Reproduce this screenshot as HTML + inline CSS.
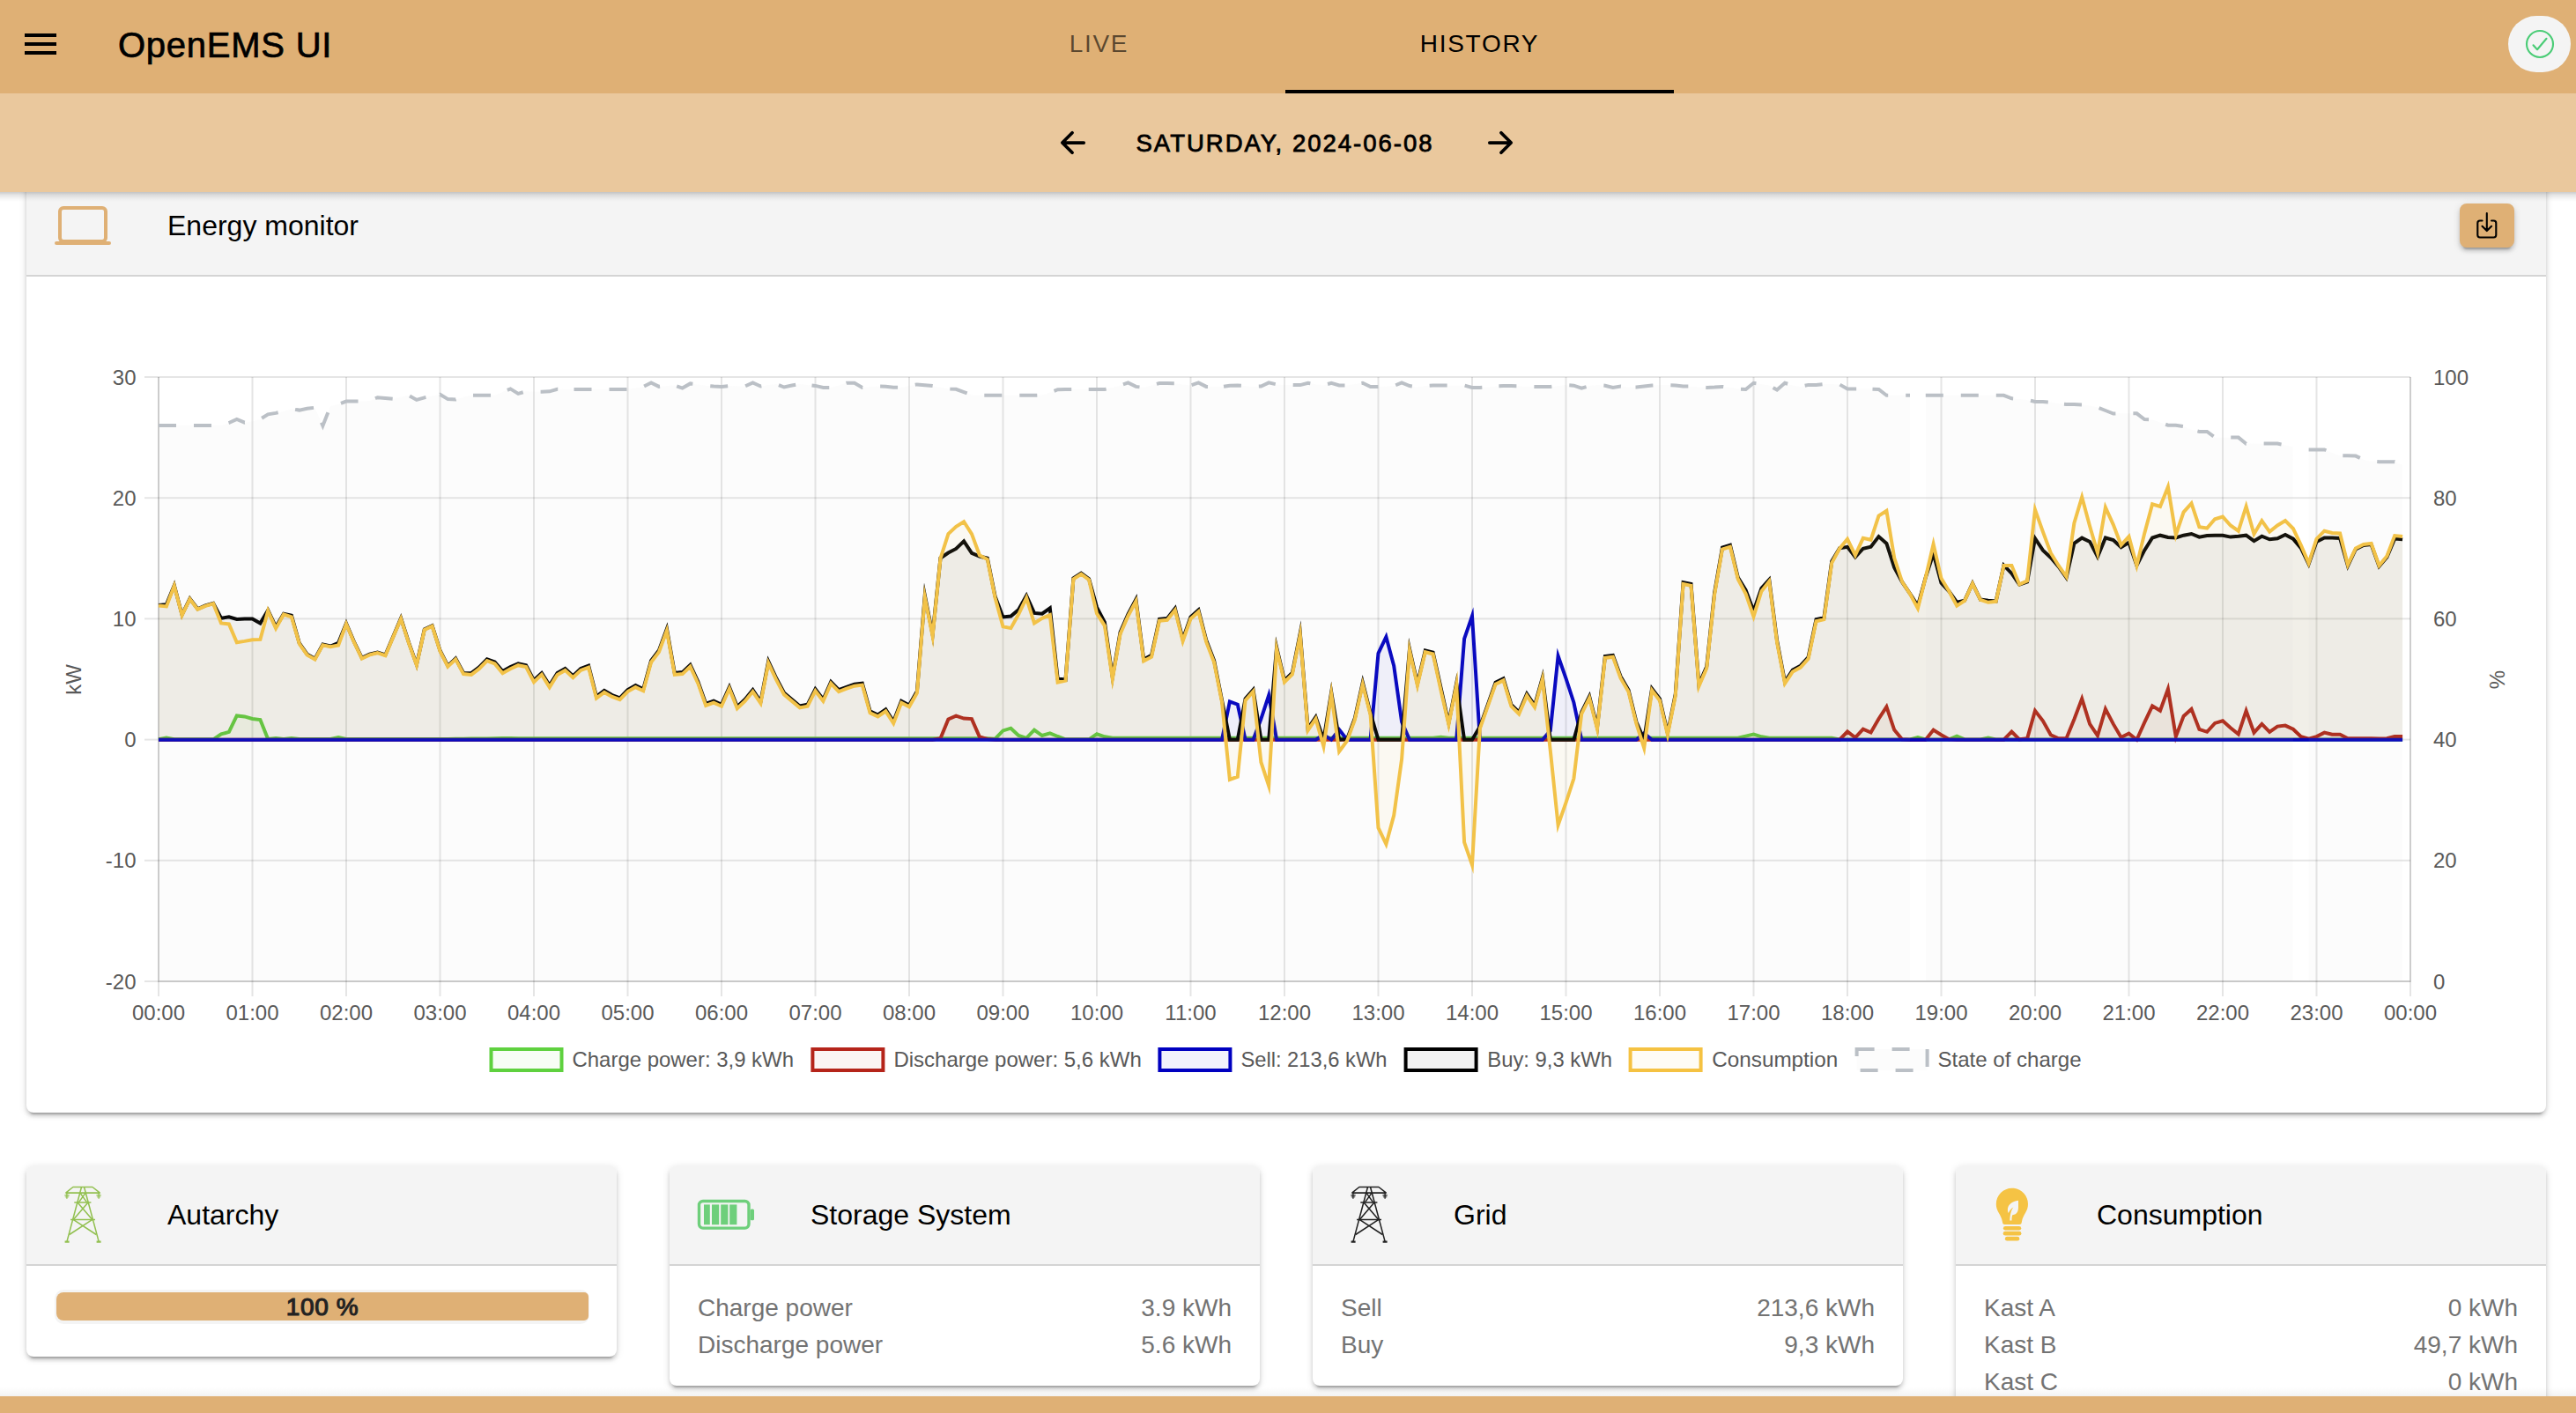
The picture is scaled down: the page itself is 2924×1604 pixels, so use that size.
<!DOCTYPE html>
<html lang="en"><head><meta charset="utf-8"><title>OpenEMS UI</title>
<style>
html,body{margin:0;padding:0}
body{width:2924px;height:1604px;overflow:hidden;background:#fff;position:relative;font-family:"Liberation Sans",sans-serif;color:#000}
.abs{position:absolute}
#h1{left:0;top:0;width:2924px;height:106px;background:#dfb075;z-index:5}
#h2{left:0;top:106px;width:2924px;height:112px;background:#eac89d;z-index:5}
#h2sh{left:0;top:218px;width:2924px;height:11px;background:linear-gradient(rgba(0,0,0,.2),rgba(0,0,0,.1) 30%,rgba(0,0,0,.03) 70%,rgba(0,0,0,0));z-index:5}
#foot{left:0;top:1585px;width:2924px;height:19px;background:#dfb075;z-index:5}
#footsh{left:0;top:1575px;width:2924px;height:10px;background:linear-gradient(rgba(0,0,0,0),rgba(0,0,0,.05));z-index:5}
.title{left:134px;top:21px;font-size:40px;line-height:60px;letter-spacing:.75px;-webkit-text-stroke:.7px #000;white-space:nowrap}
.tab{top:0;height:106px;width:441px;text-align:center;font-size:28px;line-height:100px;letter-spacing:1.7px;white-space:nowrap}
.date{left:1289.5px;top:143px;font-size:27.5px;line-height:40px;letter-spacing:2px;white-space:nowrap;-webkit-text-stroke:.8px #000}
.card{position:absolute;background:#fff;border-radius:8px;overflow:hidden;box-shadow:0 6px 2px -4px rgba(0,0,0,.2),0 4px 4px 0 rgba(0,0,0,.14),0 2px 10px 0 rgba(0,0,0,.12)}
.chead{position:absolute;left:0;top:0;right:0;height:112px;background:#f4f4f4;border-bottom:2px solid #d4d4d4}
.ctitle{position:absolute;left:160px;top:36px;font-size:32px;line-height:40px;white-space:nowrap}
.rows{position:absolute;left:32px;right:32px;top:141px;font-size:28px;line-height:42px;color:#737373}
.row{display:flex;justify-content:space-between;white-space:nowrap}
</style></head><body>
<div class="card" style="left:30px;top:200px;width:2860px;height:1063px"><div class="chead"><svg width="64" height="64" viewBox="0 0 512 512" style="position:absolute;left:32px;top:24px" fill="none" stroke="#dfb075" stroke-width="32" stroke-linejoin="round" stroke-linecap="round"><rect x="48" y="96" width="416" height="304" rx="32" ry="32"/><path d="M16 416h480"/></svg><span class="ctitle">Energy monitor</span><div class="abs" style="left:2762px;top:31px;width:62px;height:50px;border-radius:8px;background:#dfb075;box-shadow:0 6px 2px -4px rgba(0,0,0,.2),0 4px 4px 0 rgba(0,0,0,.14),0 2px 10px 0 rgba(0,0,0,.12)"><svg width="33.6" height="33.6" viewBox="0 0 512 512" style="position:absolute;left:14.2px;top:8.3px" fill="none" stroke="#000" stroke-width="32" stroke-linecap="round" stroke-linejoin="round"><path d="M336 176h40a40 40 0 0140 40v208a40 40 0 01-40 40H136a40 40 0 01-40-40V216a40 40 0 0140-40h40"/><path d="M176 272l80 80 80-80M256 48v288"/></svg></div></div></div>
<svg width="2924" height="1604" viewBox="0 0 2924 1604" style="position:absolute;left:0;top:0">
<g><rect x="285.5" y="428" width="2" height="686" fill="#000" fill-opacity="0.1"/><rect x="285.5" y="1114" width="2" height="17" fill="#000" fill-opacity="0.1"/><rect x="392" y="428" width="2" height="686" fill="#000" fill-opacity="0.1"/><rect x="392" y="1114" width="2" height="17" fill="#000" fill-opacity="0.1"/><rect x="498.5" y="428" width="2" height="686" fill="#000" fill-opacity="0.1"/><rect x="498.5" y="1114" width="2" height="17" fill="#000" fill-opacity="0.1"/><rect x="605" y="428" width="2" height="686" fill="#000" fill-opacity="0.1"/><rect x="605" y="1114" width="2" height="17" fill="#000" fill-opacity="0.1"/><rect x="711.5" y="428" width="2" height="686" fill="#000" fill-opacity="0.1"/><rect x="711.5" y="1114" width="2" height="17" fill="#000" fill-opacity="0.1"/><rect x="818" y="428" width="2" height="686" fill="#000" fill-opacity="0.1"/><rect x="818" y="1114" width="2" height="17" fill="#000" fill-opacity="0.1"/><rect x="924.5" y="428" width="2" height="686" fill="#000" fill-opacity="0.1"/><rect x="924.5" y="1114" width="2" height="17" fill="#000" fill-opacity="0.1"/><rect x="1031" y="428" width="2" height="686" fill="#000" fill-opacity="0.1"/><rect x="1031" y="1114" width="2" height="17" fill="#000" fill-opacity="0.1"/><rect x="1137.5" y="428" width="2" height="686" fill="#000" fill-opacity="0.1"/><rect x="1137.5" y="1114" width="2" height="17" fill="#000" fill-opacity="0.1"/><rect x="1244" y="428" width="2" height="686" fill="#000" fill-opacity="0.1"/><rect x="1244" y="1114" width="2" height="17" fill="#000" fill-opacity="0.1"/><rect x="1350.5" y="428" width="2" height="686" fill="#000" fill-opacity="0.1"/><rect x="1350.5" y="1114" width="2" height="17" fill="#000" fill-opacity="0.1"/><rect x="1457" y="428" width="2" height="686" fill="#000" fill-opacity="0.1"/><rect x="1457" y="1114" width="2" height="17" fill="#000" fill-opacity="0.1"/><rect x="1563.5" y="428" width="2" height="686" fill="#000" fill-opacity="0.1"/><rect x="1563.5" y="1114" width="2" height="17" fill="#000" fill-opacity="0.1"/><rect x="1670" y="428" width="2" height="686" fill="#000" fill-opacity="0.1"/><rect x="1670" y="1114" width="2" height="17" fill="#000" fill-opacity="0.1"/><rect x="1776.5" y="428" width="2" height="686" fill="#000" fill-opacity="0.1"/><rect x="1776.5" y="1114" width="2" height="17" fill="#000" fill-opacity="0.1"/><rect x="1883" y="428" width="2" height="686" fill="#000" fill-opacity="0.1"/><rect x="1883" y="1114" width="2" height="17" fill="#000" fill-opacity="0.1"/><rect x="1989.5" y="428" width="2" height="686" fill="#000" fill-opacity="0.1"/><rect x="1989.5" y="1114" width="2" height="17" fill="#000" fill-opacity="0.1"/><rect x="2096" y="428" width="2" height="686" fill="#000" fill-opacity="0.1"/><rect x="2096" y="1114" width="2" height="17" fill="#000" fill-opacity="0.1"/><rect x="2202.5" y="428" width="2" height="686" fill="#000" fill-opacity="0.1"/><rect x="2202.5" y="1114" width="2" height="17" fill="#000" fill-opacity="0.1"/><rect x="2309" y="428" width="2" height="686" fill="#000" fill-opacity="0.1"/><rect x="2309" y="1114" width="2" height="17" fill="#000" fill-opacity="0.1"/><rect x="2415.5" y="428" width="2" height="686" fill="#000" fill-opacity="0.1"/><rect x="2415.5" y="1114" width="2" height="17" fill="#000" fill-opacity="0.1"/><rect x="2522" y="428" width="2" height="686" fill="#000" fill-opacity="0.1"/><rect x="2522" y="1114" width="2" height="17" fill="#000" fill-opacity="0.1"/><rect x="2628.5" y="428" width="2" height="686" fill="#000" fill-opacity="0.1"/><rect x="2628.5" y="1114" width="2" height="17" fill="#000" fill-opacity="0.1"/><rect x="2735" y="428" width="2" height="686" fill="#000" fill-opacity="0.1"/><rect x="2735" y="1114" width="2" height="17" fill="#000" fill-opacity="0.1"/><rect x="179" y="1115" width="2" height="16" fill="#000" fill-opacity="0.1"/><rect x="164" y="427" width="2572" height="2" fill="#000" fill-opacity="0.1"/><rect x="164" y="564.2" width="2572" height="2" fill="#000" fill-opacity="0.1"/><rect x="164" y="701.4" width="2572" height="2" fill="#000" fill-opacity="0.1"/><rect x="164" y="838.6" width="2572" height="2" fill="#000" fill-opacity="0.1"/><rect x="164" y="975.8" width="2572" height="2" fill="#000" fill-opacity="0.1"/><rect x="164" y="1113" width="2572" height="2" fill="#000" fill-opacity="0.1"/><rect x="179" y="428" width="2" height="687" fill="#000" fill-opacity="0.2"/><rect x="2735" y="428" width="2" height="685" fill="#000" fill-opacity="0.1"/><rect x="181" y="1113" width="2556" height="2" fill="#000" fill-opacity="0.12"/></g>
<g fill="none" stroke-width="4" stroke-linejoin="miter" stroke-miterlimit="10">
<path d="M180 839.7 L180 839.3 L188.9 837.6 L197.8 839.3 L206.6 839.3 L215.5 839.3 L224.4 839.3 L233.2 839.3 L242.1 839.3 L251 833.4 L259.9 830.9 L268.8 812.5 L277.6 813.4 L286.5 816 L295.4 817.1 L304.2 839 L313.1 838.1 L322 839 L330.9 838.1 L339.8 839 L348.6 839 L357.5 839 L366.4 839 L375.2 839 L384.1 837 L393 839 L401.9 839 L410.8 839 L419.6 839 L428.5 839 L437.4 839 L446.2 839 L455.1 839 L464 839 L472.9 839 L481.8 839 L490.6 839 L499.5 839 L508.4 838.9 L517.2 838.8 L526.1 838.7 L535 838.6 L543.9 838.5 L552.8 838.4 L561.6 838.2 L570.5 838.1 L579.4 838 L588.2 838.3 L597.1 838.3 L606 838.3 L614.9 838.3 L623.8 838.3 L632.6 838.3 L641.5 838.3 L650.4 838.3 L659.2 838.3 L668.1 838.3 L677 838.3 L685.9 838.3 L694.8 838.3 L703.6 838.3 L712.5 838.3 L721.4 838.3 L730.2 838.3 L739.1 838.3 L748 838.3 L756.9 838.3 L765.8 838.3 L774.6 838.3 L783.5 838.3 L792.4 838.3 L801.2 838.3 L810.1 838.3 L819 838.3 L827.9 838.3 L836.8 838.3 L845.6 838.3 L854.5 838.3 L863.4 838.3 L872.2 838.3 L881.1 838.3 L890 838.3 L898.9 838.3 L907.8 838.3 L916.6 838.3 L925.5 838.3 L934.4 838.3 L943.2 838.3 L952.1 838.3 L961 838.3 L969.9 838.3 L978.8 838.3 L987.6 838.3 L996.5 838.3 L1005.4 838.3 L1014.2 838.3 L1023.1 838.3 L1032 838.3 L1040.9 838.3 L1049.8 838.3 L1058.6 838.3 L1067.5 838.3 L1076.4 838.3 L1085.2 838.3 L1094.1 838.3 L1103 838.3 L1111.9 838.3 L1120.8 838.3 L1129.6 838.7 L1138.5 829.4 L1147.4 826.7 L1156.2 835 L1165.1 837.8 L1174 828.6 L1182.9 835 L1191.8 832.3 L1200.6 836 L1209.5 839.3 L1218.4 839.3 L1227.2 839.3 L1236.1 839.3 L1245 833.3 L1253.9 836.3 L1262.8 837.8 L1271.6 837.8 L1280.5 837.8 L1289.4 837.8 L1298.2 837.8 L1307.1 837.8 L1316 837.8 L1324.9 837.8 L1333.8 837.8 L1342.6 837.8 L1351.5 837.8 L1360.4 837.8 L1369.2 837.8 L1378.1 837.8 L1387 837.8 L1395.9 837.8 L1404.8 837.8 L1413.6 837.8 L1422.5 837.8 L1431.4 837.8 L1440.2 837.8 L1449.1 837.8 L1458 837.8 L1466.9 837.8 L1475.8 837.8 L1484.6 837.8 L1493.5 837.8 L1502.4 837.8 L1511.2 837.8 L1520.1 837.8 L1529 837.8 L1537.9 837.8 L1546.8 837.8 L1555.6 837.8 L1564.5 837.8 L1573.4 837.8 L1582.2 837.8 L1591.1 837.8 L1600 837.8 L1608.9 837.8 L1617.8 837.8 L1626.6 837.8 L1635.5 836.7 L1644.4 837.8 L1653.2 837.8 L1662.1 837.8 L1671 837.8 L1679.9 837.8 L1688.8 837.8 L1697.6 837.8 L1706.5 837.8 L1715.4 837.8 L1724.2 837.8 L1733.1 837.8 L1742 837.8 L1750.9 837.8 L1759.8 837.8 L1768.6 837.8 L1777.5 837.8 L1786.4 837.8 L1795.2 837.8 L1804.1 837.8 L1813 837.8 L1821.9 837.8 L1830.8 837.8 L1839.6 837.8 L1848.5 837.8 L1857.4 837.8 L1866.2 837.8 L1875.1 837.8 L1884 837.8 L1892.9 837.8 L1901.8 837.8 L1910.6 837.8 L1919.5 837.8 L1928.4 837.8 L1937.2 837.8 L1946.1 837.8 L1955 837.8 L1963.9 837.8 L1972.8 837.8 L1981.6 835.6 L1990.5 833.5 L1999.4 836.3 L2008.2 837.8 L2017.1 837.8 L2026 837.8 L2034.9 837.8 L2043.8 837.8 L2052.6 837.8 L2061.5 837.8 L2070.4 837.8 L2079.2 837.8 L2088.1 839.4 L2097 839.4 L2105.9 839.4 L2114.8 839.4 L2123.6 839.4 L2132.5 839.4 L2141.4 839.4 L2150.2 839.4 L2159.1 839.4 L2168 839.4 L2176.9 837 L2185.8 839.4 L2194.6 839.4 L2203.5 839.4 L2212.4 839.4 L2221.2 835.6 L2230.1 839.4 L2239 839.4 L2247.9 839.4 L2256.8 837.6 L2265.6 839.4 L2274.5 839.4 L2283.4 839.4 L2292.2 839.4 L2301.1 839.4 L2310 839.4 L2318.9 839.4 L2327.8 839.4 L2336.6 839.4 L2345.5 839.4 L2354.4 839.4 L2363.2 839.4 L2372.1 839.4 L2381 839.4 L2389.9 839.4 L2398.8 839.4 L2407.6 839.4 L2416.5 839.4 L2425.4 839.4 L2434.2 839.4 L2443.1 839.4 L2452 839.4 L2460.9 839.4 L2469.8 839.4 L2478.6 839.4 L2487.5 839.4 L2496.4 839.4 L2505.2 839.4 L2514.1 839.4 L2523 839.4 L2531.9 839.4 L2540.8 839.4 L2549.6 839.4 L2558.5 839.4 L2567.4 839.4 L2576.2 839.4 L2585.1 839.4 L2594 839.4 L2602.9 839.4 L2611.8 839.4 L2620.6 839.4 L2629.5 839.4 L2638.4 839.4 L2647.2 839.4 L2656.1 839.4 L2665 839.4 L2673.9 839.4 L2682.8 839.4 L2691.6 839.4 L2700.5 839.4 L2709.4 839.4 L2718.2 839.4 L2727.1 839.4 L2727.1 839.7 Z" fill="rgb(95,209,63)" fill-opacity="0.05" stroke="none"/>
<path d="M180 839.3 L188.9 837.6 L197.8 839.3 L206.6 839.3 L215.5 839.3 L224.4 839.3 L233.2 839.3 L242.1 839.3 L251 833.4 L259.9 830.9 L268.8 812.5 L277.6 813.4 L286.5 816 L295.4 817.1 L304.2 839 L313.1 838.1 L322 839 L330.9 838.1 L339.8 839 L348.6 839 L357.5 839 L366.4 839 L375.2 839 L384.1 837 L393 839 L401.9 839 L410.8 839 L419.6 839 L428.5 839 L437.4 839 L446.2 839 L455.1 839 L464 839 L472.9 839 L481.8 839 L490.6 839 L499.5 839 L508.4 838.9 L517.2 838.8 L526.1 838.7 L535 838.6 L543.9 838.5 L552.8 838.4 L561.6 838.2 L570.5 838.1 L579.4 838 L588.2 838.3 L597.1 838.3 L606 838.3 L614.9 838.3 L623.8 838.3 L632.6 838.3 L641.5 838.3 L650.4 838.3 L659.2 838.3 L668.1 838.3 L677 838.3 L685.9 838.3 L694.8 838.3 L703.6 838.3 L712.5 838.3 L721.4 838.3 L730.2 838.3 L739.1 838.3 L748 838.3 L756.9 838.3 L765.8 838.3 L774.6 838.3 L783.5 838.3 L792.4 838.3 L801.2 838.3 L810.1 838.3 L819 838.3 L827.9 838.3 L836.8 838.3 L845.6 838.3 L854.5 838.3 L863.4 838.3 L872.2 838.3 L881.1 838.3 L890 838.3 L898.9 838.3 L907.8 838.3 L916.6 838.3 L925.5 838.3 L934.4 838.3 L943.2 838.3 L952.1 838.3 L961 838.3 L969.9 838.3 L978.8 838.3 L987.6 838.3 L996.5 838.3 L1005.4 838.3 L1014.2 838.3 L1023.1 838.3 L1032 838.3 L1040.9 838.3 L1049.8 838.3 L1058.6 838.3 L1067.5 838.3 L1076.4 838.3 L1085.2 838.3 L1094.1 838.3 L1103 838.3 L1111.9 838.3 L1120.8 838.3 L1129.6 838.7 L1138.5 829.4 L1147.4 826.7 L1156.2 835 L1165.1 837.8 L1174 828.6 L1182.9 835 L1191.8 832.3 L1200.6 836 L1209.5 839.3 L1218.4 839.3 L1227.2 839.3 L1236.1 839.3 L1245 833.3 L1253.9 836.3 L1262.8 837.8 L1271.6 837.8 L1280.5 837.8 L1289.4 837.8 L1298.2 837.8 L1307.1 837.8 L1316 837.8 L1324.9 837.8 L1333.8 837.8 L1342.6 837.8 L1351.5 837.8 L1360.4 837.8 L1369.2 837.8 L1378.1 837.8 L1387 837.8 L1395.9 837.8 L1404.8 837.8 L1413.6 837.8 L1422.5 837.8 L1431.4 837.8 L1440.2 837.8 L1449.1 837.8 L1458 837.8 L1466.9 837.8 L1475.8 837.8 L1484.6 837.8 L1493.5 837.8 L1502.4 837.8 L1511.2 837.8 L1520.1 837.8 L1529 837.8 L1537.9 837.8 L1546.8 837.8 L1555.6 837.8 L1564.5 837.8 L1573.4 837.8 L1582.2 837.8 L1591.1 837.8 L1600 837.8 L1608.9 837.8 L1617.8 837.8 L1626.6 837.8 L1635.5 836.7 L1644.4 837.8 L1653.2 837.8 L1662.1 837.8 L1671 837.8 L1679.9 837.8 L1688.8 837.8 L1697.6 837.8 L1706.5 837.8 L1715.4 837.8 L1724.2 837.8 L1733.1 837.8 L1742 837.8 L1750.9 837.8 L1759.8 837.8 L1768.6 837.8 L1777.5 837.8 L1786.4 837.8 L1795.2 837.8 L1804.1 837.8 L1813 837.8 L1821.9 837.8 L1830.8 837.8 L1839.6 837.8 L1848.5 837.8 L1857.4 837.8 L1866.2 837.8 L1875.1 837.8 L1884 837.8 L1892.9 837.8 L1901.8 837.8 L1910.6 837.8 L1919.5 837.8 L1928.4 837.8 L1937.2 837.8 L1946.1 837.8 L1955 837.8 L1963.9 837.8 L1972.8 837.8 L1981.6 835.6 L1990.5 833.5 L1999.4 836.3 L2008.2 837.8 L2017.1 837.8 L2026 837.8 L2034.9 837.8 L2043.8 837.8 L2052.6 837.8 L2061.5 837.8 L2070.4 837.8 L2079.2 837.8 L2088.1 839.4 L2097 839.4 L2105.9 839.4 L2114.8 839.4 L2123.6 839.4 L2132.5 839.4 L2141.4 839.4 L2150.2 839.4 L2159.1 839.4 L2168 839.4 L2176.9 837 L2185.8 839.4 L2194.6 839.4 L2203.5 839.4 L2212.4 839.4 L2221.2 835.6 L2230.1 839.4 L2239 839.4 L2247.9 839.4 L2256.8 837.6 L2265.6 839.4 L2274.5 839.4 L2283.4 839.4 L2292.2 839.4 L2301.1 839.4 L2310 839.4 L2318.9 839.4 L2327.8 839.4 L2336.6 839.4 L2345.5 839.4 L2354.4 839.4 L2363.2 839.4 L2372.1 839.4 L2381 839.4 L2389.9 839.4 L2398.8 839.4 L2407.6 839.4 L2416.5 839.4 L2425.4 839.4 L2434.2 839.4 L2443.1 839.4 L2452 839.4 L2460.9 839.4 L2469.8 839.4 L2478.6 839.4 L2487.5 839.4 L2496.4 839.4 L2505.2 839.4 L2514.1 839.4 L2523 839.4 L2531.9 839.4 L2540.8 839.4 L2549.6 839.4 L2558.5 839.4 L2567.4 839.4 L2576.2 839.4 L2585.1 839.4 L2594 839.4 L2602.9 839.4 L2611.8 839.4 L2620.6 839.4 L2629.5 839.4 L2638.4 839.4 L2647.2 839.4 L2656.1 839.4 L2665 839.4 L2673.9 839.4 L2682.8 839.4 L2691.6 839.4 L2700.5 839.4 L2709.4 839.4 L2718.2 839.4 L2727.1 839.4" stroke="#5fd13f"/>
<path d="M180 839.7 L180 839.7 L188.9 839.7 L197.8 839.7 L206.6 839.7 L215.5 839.7 L224.4 839.7 L233.2 839.7 L242.1 839.7 L251 839.7 L259.9 839.7 L268.8 839.7 L277.6 839.7 L286.5 839.7 L295.4 839.7 L304.2 839.7 L313.1 839.7 L322 839.7 L330.9 839.7 L339.8 839.7 L348.6 839.7 L357.5 839.7 L366.4 839.7 L375.2 839.7 L384.1 839.7 L393 839.7 L401.9 839.7 L410.8 839.7 L419.6 839.7 L428.5 839.7 L437.4 839.7 L446.2 839.7 L455.1 839.7 L464 839.7 L472.9 839.7 L481.8 839.7 L490.6 839.7 L499.5 839.7 L508.4 839.7 L517.2 839.7 L526.1 839.7 L535 839.7 L543.9 839.7 L552.8 839.7 L561.6 839.7 L570.5 839.7 L579.4 839.7 L588.2 839.7 L597.1 839.7 L606 839.7 L614.9 839.7 L623.8 839.7 L632.6 839.7 L641.5 839.7 L650.4 839.7 L659.2 839.7 L668.1 839.7 L677 839.7 L685.9 839.7 L694.8 839.7 L703.6 839.7 L712.5 839.7 L721.4 839.7 L730.2 839.7 L739.1 839.7 L748 839.7 L756.9 839.7 L765.8 839.7 L774.6 839.7 L783.5 839.7 L792.4 839.7 L801.2 839.7 L810.1 839.7 L819 839.7 L827.9 839.7 L836.8 839.7 L845.6 839.7 L854.5 839.7 L863.4 839.7 L872.2 839.7 L881.1 839.7 L890 839.7 L898.9 839.7 L907.8 839.7 L916.6 839.7 L925.5 839.7 L934.4 839.7 L943.2 839.7 L952.1 839.7 L961 839.7 L969.9 839.7 L978.8 839.7 L987.6 839.7 L996.5 839.7 L1005.4 839.7 L1014.2 839.7 L1023.1 839.7 L1032 839.7 L1040.9 839.7 L1049.8 839.7 L1058.6 839.7 L1067.5 838.3 L1076.4 816.4 L1085.2 812.7 L1094.1 815.6 L1103 816.1 L1111.9 836.5 L1120.8 839 L1129.6 839.7 L1138.5 839.7 L1147.4 839.7 L1156.2 839.7 L1165.1 839.7 L1174 839.7 L1182.9 839.7 L1191.8 839.7 L1200.6 839.7 L1209.5 839.7 L1218.4 839.7 L1227.2 839.7 L1236.1 839.7 L1245 839.7 L1253.9 839.7 L1262.8 839.7 L1271.6 839.7 L1280.5 839.7 L1289.4 839.7 L1298.2 839.7 L1307.1 839.7 L1316 839.7 L1324.9 839.7 L1333.8 839.7 L1342.6 839.7 L1351.5 839.7 L1360.4 839.7 L1369.2 839.7 L1378.1 839.7 L1387 839.7 L1395.9 839.7 L1404.8 839.7 L1413.6 839.7 L1422.5 839.7 L1431.4 839.7 L1440.2 839.7 L1449.1 839.7 L1458 839.7 L1466.9 839.7 L1475.8 839.7 L1484.6 839.7 L1493.5 839.7 L1502.4 839.7 L1511.2 839.7 L1520.1 839.7 L1529 839.7 L1537.9 839.7 L1546.8 839.7 L1555.6 839.7 L1564.5 839.7 L1573.4 839.7 L1582.2 839.7 L1591.1 839.7 L1600 839.7 L1608.9 839.7 L1617.8 839.7 L1626.6 839.7 L1635.5 839.7 L1644.4 839.7 L1653.2 839.7 L1662.1 839.7 L1671 839.7 L1679.9 839.7 L1688.8 839.7 L1697.6 839.7 L1706.5 839.7 L1715.4 839.7 L1724.2 839.7 L1733.1 839.7 L1742 839.7 L1750.9 839.7 L1759.8 839.7 L1768.6 839.7 L1777.5 839.7 L1786.4 839.7 L1795.2 839.7 L1804.1 839.7 L1813 839.7 L1821.9 839.7 L1830.8 839.7 L1839.6 839.7 L1848.5 839.7 L1857.4 839.7 L1866.2 839.7 L1875.1 839.7 L1884 839.7 L1892.9 839.7 L1901.8 839.7 L1910.6 839.7 L1919.5 839.7 L1928.4 839.7 L1937.2 839.7 L1946.1 839.7 L1955 839.7 L1963.9 839.7 L1972.8 839.7 L1981.6 839.7 L1990.5 839.7 L1999.4 839.7 L2008.2 839.7 L2017.1 839.7 L2026 839.7 L2034.9 839.7 L2043.8 839.7 L2052.6 839.7 L2061.5 839.7 L2070.4 839.7 L2079.2 839.7 L2088.1 839.7 L2097 830.5 L2105.9 837.4 L2114.8 827.6 L2123.6 831.5 L2132.5 816 L2141.4 802.4 L2150.2 828.6 L2159.1 839.3 L2168 839.7 L2176.9 839.7 L2185.8 839.7 L2194.6 828.6 L2203.5 834.3 L2212.4 839.3 L2221.2 839.7 L2230.1 839.7 L2239 839.7 L2247.9 839.7 L2256.8 839.7 L2265.6 839.7 L2274.5 839.7 L2283.4 830.5 L2292.2 839.3 L2301.1 838.3 L2310 806.8 L2318.9 818.3 L2327.8 834.2 L2336.6 838.3 L2345.5 838.3 L2354.4 816.4 L2363.2 793.1 L2372.1 821.9 L2381 835.2 L2389.9 804.9 L2398.8 821.9 L2407.6 837 L2416.5 832.6 L2425.4 839.7 L2434.2 820.1 L2443.1 801.3 L2452 806.8 L2460.9 782.1 L2469.8 836.1 L2478.6 812.9 L2487.5 804.9 L2496.4 828 L2505.2 830.8 L2514.1 820.9 L2523 818.3 L2531.9 826.3 L2540.8 833.4 L2549.6 806.8 L2558.5 831.6 L2567.4 821.9 L2576.2 830.8 L2585.1 824.6 L2594 823.6 L2602.9 827.8 L2611.8 836.1 L2620.6 838.6 L2629.5 836.1 L2638.4 831.6 L2647.2 833.8 L2656.1 833.8 L2665 838.3 L2673.9 838.3 L2682.8 838.3 L2691.6 838.3 L2700.5 838.6 L2709.4 838.3 L2718.2 836.1 L2727.1 836.1 L2727.1 839.7 Z" fill="rgb(181,36,26)" fill-opacity="0.05" stroke="none"/>
<path d="M180 839.7 L188.9 839.7 L197.8 839.7 L206.6 839.7 L215.5 839.7 L224.4 839.7 L233.2 839.7 L242.1 839.7 L251 839.7 L259.9 839.7 L268.8 839.7 L277.6 839.7 L286.5 839.7 L295.4 839.7 L304.2 839.7 L313.1 839.7 L322 839.7 L330.9 839.7 L339.8 839.7 L348.6 839.7 L357.5 839.7 L366.4 839.7 L375.2 839.7 L384.1 839.7 L393 839.7 L401.9 839.7 L410.8 839.7 L419.6 839.7 L428.5 839.7 L437.4 839.7 L446.2 839.7 L455.1 839.7 L464 839.7 L472.9 839.7 L481.8 839.7 L490.6 839.7 L499.5 839.7 L508.4 839.7 L517.2 839.7 L526.1 839.7 L535 839.7 L543.9 839.7 L552.8 839.7 L561.6 839.7 L570.5 839.7 L579.4 839.7 L588.2 839.7 L597.1 839.7 L606 839.7 L614.9 839.7 L623.8 839.7 L632.6 839.7 L641.5 839.7 L650.4 839.7 L659.2 839.7 L668.1 839.7 L677 839.7 L685.9 839.7 L694.8 839.7 L703.6 839.7 L712.5 839.7 L721.4 839.7 L730.2 839.7 L739.1 839.7 L748 839.7 L756.9 839.7 L765.8 839.7 L774.6 839.7 L783.5 839.7 L792.4 839.7 L801.2 839.7 L810.1 839.7 L819 839.7 L827.9 839.7 L836.8 839.7 L845.6 839.7 L854.5 839.7 L863.4 839.7 L872.2 839.7 L881.1 839.7 L890 839.7 L898.9 839.7 L907.8 839.7 L916.6 839.7 L925.5 839.7 L934.4 839.7 L943.2 839.7 L952.1 839.7 L961 839.7 L969.9 839.7 L978.8 839.7 L987.6 839.7 L996.5 839.7 L1005.4 839.7 L1014.2 839.7 L1023.1 839.7 L1032 839.7 L1040.9 839.7 L1049.8 839.7 L1058.6 839.7 L1067.5 838.3 L1076.4 816.4 L1085.2 812.7 L1094.1 815.6 L1103 816.1 L1111.9 836.5 L1120.8 839 L1129.6 839.7 L1138.5 839.7 L1147.4 839.7 L1156.2 839.7 L1165.1 839.7 L1174 839.7 L1182.9 839.7 L1191.8 839.7 L1200.6 839.7 L1209.5 839.7 L1218.4 839.7 L1227.2 839.7 L1236.1 839.7 L1245 839.7 L1253.9 839.7 L1262.8 839.7 L1271.6 839.7 L1280.5 839.7 L1289.4 839.7 L1298.2 839.7 L1307.1 839.7 L1316 839.7 L1324.9 839.7 L1333.8 839.7 L1342.6 839.7 L1351.5 839.7 L1360.4 839.7 L1369.2 839.7 L1378.1 839.7 L1387 839.7 L1395.9 839.7 L1404.8 839.7 L1413.6 839.7 L1422.5 839.7 L1431.4 839.7 L1440.2 839.7 L1449.1 839.7 L1458 839.7 L1466.9 839.7 L1475.8 839.7 L1484.6 839.7 L1493.5 839.7 L1502.4 839.7 L1511.2 839.7 L1520.1 839.7 L1529 839.7 L1537.9 839.7 L1546.8 839.7 L1555.6 839.7 L1564.5 839.7 L1573.4 839.7 L1582.2 839.7 L1591.1 839.7 L1600 839.7 L1608.9 839.7 L1617.8 839.7 L1626.6 839.7 L1635.5 839.7 L1644.4 839.7 L1653.2 839.7 L1662.1 839.7 L1671 839.7 L1679.9 839.7 L1688.8 839.7 L1697.6 839.7 L1706.5 839.7 L1715.4 839.7 L1724.2 839.7 L1733.1 839.7 L1742 839.7 L1750.9 839.7 L1759.8 839.7 L1768.6 839.7 L1777.5 839.7 L1786.4 839.7 L1795.2 839.7 L1804.1 839.7 L1813 839.7 L1821.9 839.7 L1830.8 839.7 L1839.6 839.7 L1848.5 839.7 L1857.4 839.7 L1866.2 839.7 L1875.1 839.7 L1884 839.7 L1892.9 839.7 L1901.8 839.7 L1910.6 839.7 L1919.5 839.7 L1928.4 839.7 L1937.2 839.7 L1946.1 839.7 L1955 839.7 L1963.9 839.7 L1972.8 839.7 L1981.6 839.7 L1990.5 839.7 L1999.4 839.7 L2008.2 839.7 L2017.1 839.7 L2026 839.7 L2034.9 839.7 L2043.8 839.7 L2052.6 839.7 L2061.5 839.7 L2070.4 839.7 L2079.2 839.7 L2088.1 839.7 L2097 830.5 L2105.9 837.4 L2114.8 827.6 L2123.6 831.5 L2132.5 816 L2141.4 802.4 L2150.2 828.6 L2159.1 839.3 L2168 839.7 L2176.9 839.7 L2185.8 839.7 L2194.6 828.6 L2203.5 834.3 L2212.4 839.3 L2221.2 839.7 L2230.1 839.7 L2239 839.7 L2247.9 839.7 L2256.8 839.7 L2265.6 839.7 L2274.5 839.7 L2283.4 830.5 L2292.2 839.3 L2301.1 838.3 L2310 806.8 L2318.9 818.3 L2327.8 834.2 L2336.6 838.3 L2345.5 838.3 L2354.4 816.4 L2363.2 793.1 L2372.1 821.9 L2381 835.2 L2389.9 804.9 L2398.8 821.9 L2407.6 837 L2416.5 832.6 L2425.4 839.7 L2434.2 820.1 L2443.1 801.3 L2452 806.8 L2460.9 782.1 L2469.8 836.1 L2478.6 812.9 L2487.5 804.9 L2496.4 828 L2505.2 830.8 L2514.1 820.9 L2523 818.3 L2531.9 826.3 L2540.8 833.4 L2549.6 806.8 L2558.5 831.6 L2567.4 821.9 L2576.2 830.8 L2585.1 824.6 L2594 823.6 L2602.9 827.8 L2611.8 836.1 L2620.6 838.6 L2629.5 836.1 L2638.4 831.6 L2647.2 833.8 L2656.1 833.8 L2665 838.3 L2673.9 838.3 L2682.8 838.3 L2691.6 838.3 L2700.5 838.6 L2709.4 838.3 L2718.2 836.1 L2727.1 836.1" stroke="#b5241a"/>
<path d="M180 839.7 L180 839.7 L188.9 839.7 L197.8 839.7 L206.6 839.7 L215.5 839.7 L224.4 839.7 L233.2 839.7 L242.1 839.7 L251 839.7 L259.9 839.7 L268.8 839.7 L277.6 839.7 L286.5 839.7 L295.4 839.7 L304.2 839.7 L313.1 839.7 L322 839.7 L330.9 839.7 L339.8 839.7 L348.6 839.7 L357.5 839.7 L366.4 839.7 L375.2 839.7 L384.1 839.7 L393 839.7 L401.9 839.7 L410.8 839.7 L419.6 839.7 L428.5 839.7 L437.4 839.7 L446.2 839.7 L455.1 839.7 L464 839.7 L472.9 839.7 L481.8 839.7 L490.6 839.7 L499.5 839.7 L508.4 839.7 L517.2 839.7 L526.1 839.7 L535 839.7 L543.9 839.7 L552.8 839.7 L561.6 839.7 L570.5 839.7 L579.4 839.7 L588.2 839.7 L597.1 839.7 L606 839.7 L614.9 839.7 L623.8 839.7 L632.6 839.7 L641.5 839.7 L650.4 839.7 L659.2 839.7 L668.1 839.7 L677 839.7 L685.9 839.7 L694.8 839.7 L703.6 839.7 L712.5 839.7 L721.4 839.7 L730.2 839.7 L739.1 839.7 L748 839.7 L756.9 839.7 L765.8 839.7 L774.6 839.7 L783.5 839.7 L792.4 839.7 L801.2 839.7 L810.1 839.7 L819 839.7 L827.9 839.7 L836.8 839.7 L845.6 839.7 L854.5 839.7 L863.4 839.7 L872.2 839.7 L881.1 839.7 L890 839.7 L898.9 839.7 L907.8 839.7 L916.6 839.7 L925.5 839.7 L934.4 839.7 L943.2 839.7 L952.1 839.7 L961 839.7 L969.9 839.7 L978.8 839.7 L987.6 839.7 L996.5 839.7 L1005.4 839.7 L1014.2 839.7 L1023.1 839.7 L1032 839.7 L1040.9 839.7 L1049.8 839.7 L1058.6 839.7 L1067.5 839.7 L1076.4 839.7 L1085.2 839.7 L1094.1 839.7 L1103 839.7 L1111.9 839.7 L1120.8 839.7 L1129.6 839.7 L1138.5 839.7 L1147.4 839.7 L1156.2 839.7 L1165.1 839.7 L1174 839.7 L1182.9 839.7 L1191.8 839.7 L1200.6 839.7 L1209.5 839.7 L1218.4 839.7 L1227.2 839.7 L1236.1 839.7 L1245 839.7 L1253.9 839.7 L1262.8 839.7 L1271.6 839.7 L1280.5 839.7 L1289.4 839.7 L1298.2 839.7 L1307.1 839.7 L1316 839.7 L1324.9 839.7 L1333.8 839.7 L1342.6 839.7 L1351.5 839.7 L1360.4 839.7 L1369.2 839.7 L1378.1 839.7 L1387 839.7 L1395.9 796.4 L1404.8 799.7 L1413.6 839.7 L1422.5 839.7 L1431.4 816.1 L1440.2 789.3 L1449.1 839.7 L1458 839.7 L1466.9 839.7 L1475.8 839.7 L1484.6 839.7 L1493.5 839.7 L1502.4 834.1 L1511.2 839.7 L1520.1 828.2 L1529 839.7 L1537.9 839.7 L1546.8 839.7 L1555.6 839.7 L1564.5 741.6 L1573.4 723 L1582.2 755.8 L1591.1 819.4 L1600 839.7 L1608.9 839.7 L1617.8 839.7 L1626.6 839.7 L1635.5 839.7 L1644.4 839.7 L1653.2 839.7 L1662.1 725.2 L1671 699.4 L1679.9 839.7 L1688.8 839.7 L1697.6 839.7 L1706.5 839.7 L1715.4 839.7 L1724.2 839.7 L1733.1 839.7 L1742 839.7 L1750.9 839.7 L1759.8 829.3 L1768.6 744.6 L1777.5 770.1 L1786.4 797.5 L1795.2 839.7 L1804.1 839.7 L1813 839.7 L1821.9 839.7 L1830.8 839.7 L1839.6 839.7 L1848.5 839.7 L1857.4 839.7 L1866.2 832.3 L1875.1 839.7 L1884 839.7 L1892.9 839.7 L1901.8 839.7 L1910.6 839.7 L1919.5 839.7 L1928.4 839.7 L1937.2 839.7 L1946.1 839.7 L1955 839.7 L1963.9 839.7 L1972.8 839.7 L1981.6 839.7 L1990.5 839.7 L1999.4 839.7 L2008.2 839.7 L2017.1 839.7 L2026 839.7 L2034.9 839.7 L2043.8 839.7 L2052.6 839.7 L2061.5 839.7 L2070.4 839.7 L2079.2 839.7 L2088.1 839.7 L2097 839.7 L2105.9 839.7 L2114.8 839.7 L2123.6 839.7 L2132.5 839.7 L2141.4 839.7 L2150.2 839.7 L2159.1 839.7 L2168 839.7 L2176.9 839.7 L2185.8 839.7 L2194.6 839.7 L2203.5 839.7 L2212.4 839.7 L2221.2 839.7 L2230.1 839.7 L2239 839.7 L2247.9 839.7 L2256.8 839.7 L2265.6 839.7 L2274.5 839.7 L2283.4 839.7 L2292.2 839.7 L2301.1 839.7 L2310 839.7 L2318.9 839.7 L2327.8 839.7 L2336.6 839.7 L2345.5 839.7 L2354.4 839.7 L2363.2 839.7 L2372.1 839.7 L2381 839.7 L2389.9 839.7 L2398.8 839.7 L2407.6 839.7 L2416.5 839.7 L2425.4 839.7 L2434.2 839.7 L2443.1 839.7 L2452 839.7 L2460.9 839.7 L2469.8 839.7 L2478.6 839.7 L2487.5 839.7 L2496.4 839.7 L2505.2 839.7 L2514.1 839.7 L2523 839.7 L2531.9 839.7 L2540.8 839.7 L2549.6 839.7 L2558.5 839.7 L2567.4 839.7 L2576.2 839.7 L2585.1 839.7 L2594 839.7 L2602.9 839.7 L2611.8 839.7 L2620.6 839.7 L2629.5 839.7 L2638.4 839.7 L2647.2 839.7 L2656.1 839.7 L2665 839.7 L2673.9 839.7 L2682.8 839.7 L2691.6 839.7 L2700.5 839.7 L2709.4 839.7 L2718.2 839.7 L2727.1 839.7 L2727.1 839.7 Z" fill="rgb(0,0,200)" fill-opacity="0.05" stroke="none"/>
<path d="M180 839.7 L188.9 839.7 L197.8 839.7 L206.6 839.7 L215.5 839.7 L224.4 839.7 L233.2 839.7 L242.1 839.7 L251 839.7 L259.9 839.7 L268.8 839.7 L277.6 839.7 L286.5 839.7 L295.4 839.7 L304.2 839.7 L313.1 839.7 L322 839.7 L330.9 839.7 L339.8 839.7 L348.6 839.7 L357.5 839.7 L366.4 839.7 L375.2 839.7 L384.1 839.7 L393 839.7 L401.9 839.7 L410.8 839.7 L419.6 839.7 L428.5 839.7 L437.4 839.7 L446.2 839.7 L455.1 839.7 L464 839.7 L472.9 839.7 L481.8 839.7 L490.6 839.7 L499.5 839.7 L508.4 839.7 L517.2 839.7 L526.1 839.7 L535 839.7 L543.9 839.7 L552.8 839.7 L561.6 839.7 L570.5 839.7 L579.4 839.7 L588.2 839.7 L597.1 839.7 L606 839.7 L614.9 839.7 L623.8 839.7 L632.6 839.7 L641.5 839.7 L650.4 839.7 L659.2 839.7 L668.1 839.7 L677 839.7 L685.9 839.7 L694.8 839.7 L703.6 839.7 L712.5 839.7 L721.4 839.7 L730.2 839.7 L739.1 839.7 L748 839.7 L756.9 839.7 L765.8 839.7 L774.6 839.7 L783.5 839.7 L792.4 839.7 L801.2 839.7 L810.1 839.7 L819 839.7 L827.9 839.7 L836.8 839.7 L845.6 839.7 L854.5 839.7 L863.4 839.7 L872.2 839.7 L881.1 839.7 L890 839.7 L898.9 839.7 L907.8 839.7 L916.6 839.7 L925.5 839.7 L934.4 839.7 L943.2 839.7 L952.1 839.7 L961 839.7 L969.9 839.7 L978.8 839.7 L987.6 839.7 L996.5 839.7 L1005.4 839.7 L1014.2 839.7 L1023.1 839.7 L1032 839.7 L1040.9 839.7 L1049.8 839.7 L1058.6 839.7 L1067.5 839.7 L1076.4 839.7 L1085.2 839.7 L1094.1 839.7 L1103 839.7 L1111.9 839.7 L1120.8 839.7 L1129.6 839.7 L1138.5 839.7 L1147.4 839.7 L1156.2 839.7 L1165.1 839.7 L1174 839.7 L1182.9 839.7 L1191.8 839.7 L1200.6 839.7 L1209.5 839.7 L1218.4 839.7 L1227.2 839.7 L1236.1 839.7 L1245 839.7 L1253.9 839.7 L1262.8 839.7 L1271.6 839.7 L1280.5 839.7 L1289.4 839.7 L1298.2 839.7 L1307.1 839.7 L1316 839.7 L1324.9 839.7 L1333.8 839.7 L1342.6 839.7 L1351.5 839.7 L1360.4 839.7 L1369.2 839.7 L1378.1 839.7 L1387 839.7 L1395.9 796.4 L1404.8 799.7 L1413.6 839.7 L1422.5 839.7 L1431.4 816.1 L1440.2 789.3 L1449.1 839.7 L1458 839.7 L1466.9 839.7 L1475.8 839.7 L1484.6 839.7 L1493.5 839.7 L1502.4 834.1 L1511.2 839.7 L1520.1 828.2 L1529 839.7 L1537.9 839.7 L1546.8 839.7 L1555.6 839.7 L1564.5 741.6 L1573.4 723 L1582.2 755.8 L1591.1 819.4 L1600 839.7 L1608.9 839.7 L1617.8 839.7 L1626.6 839.7 L1635.5 839.7 L1644.4 839.7 L1653.2 839.7 L1662.1 725.2 L1671 699.4 L1679.9 839.7 L1688.8 839.7 L1697.6 839.7 L1706.5 839.7 L1715.4 839.7 L1724.2 839.7 L1733.1 839.7 L1742 839.7 L1750.9 839.7 L1759.8 829.3 L1768.6 744.6 L1777.5 770.1 L1786.4 797.5 L1795.2 839.7 L1804.1 839.7 L1813 839.7 L1821.9 839.7 L1830.8 839.7 L1839.6 839.7 L1848.5 839.7 L1857.4 839.7 L1866.2 832.3 L1875.1 839.7 L1884 839.7 L1892.9 839.7 L1901.8 839.7 L1910.6 839.7 L1919.5 839.7 L1928.4 839.7 L1937.2 839.7 L1946.1 839.7 L1955 839.7 L1963.9 839.7 L1972.8 839.7 L1981.6 839.7 L1990.5 839.7 L1999.4 839.7 L2008.2 839.7 L2017.1 839.7 L2026 839.7 L2034.9 839.7 L2043.8 839.7 L2052.6 839.7 L2061.5 839.7 L2070.4 839.7 L2079.2 839.7 L2088.1 839.7 L2097 839.7 L2105.9 839.7 L2114.8 839.7 L2123.6 839.7 L2132.5 839.7 L2141.4 839.7 L2150.2 839.7 L2159.1 839.7 L2168 839.7 L2176.9 839.7 L2185.8 839.7 L2194.6 839.7 L2203.5 839.7 L2212.4 839.7 L2221.2 839.7 L2230.1 839.7 L2239 839.7 L2247.9 839.7 L2256.8 839.7 L2265.6 839.7 L2274.5 839.7 L2283.4 839.7 L2292.2 839.7 L2301.1 839.7 L2310 839.7 L2318.9 839.7 L2327.8 839.7 L2336.6 839.7 L2345.5 839.7 L2354.4 839.7 L2363.2 839.7 L2372.1 839.7 L2381 839.7 L2389.9 839.7 L2398.8 839.7 L2407.6 839.7 L2416.5 839.7 L2425.4 839.7 L2434.2 839.7 L2443.1 839.7 L2452 839.7 L2460.9 839.7 L2469.8 839.7 L2478.6 839.7 L2487.5 839.7 L2496.4 839.7 L2505.2 839.7 L2514.1 839.7 L2523 839.7 L2531.9 839.7 L2540.8 839.7 L2549.6 839.7 L2558.5 839.7 L2567.4 839.7 L2576.2 839.7 L2585.1 839.7 L2594 839.7 L2602.9 839.7 L2611.8 839.7 L2620.6 839.7 L2629.5 839.7 L2638.4 839.7 L2647.2 839.7 L2656.1 839.7 L2665 839.7 L2673.9 839.7 L2682.8 839.7 L2691.6 839.7 L2700.5 839.7 L2709.4 839.7 L2718.2 839.7 L2727.1 839.7" stroke="#0000c0"/>
<path d="M180 839.7 L180 687.1 L188.9 686.3 L197.8 664.6 L206.6 697.9 L215.5 679.6 L224.4 691.3 L233.2 687.4 L242.1 684.9 L251 701.7 L259.9 700.3 L268.8 703 L277.6 702.5 L286.5 702.5 L295.4 707.6 L304.2 692.7 L313.1 711.7 L322 696.8 L330.9 698.7 L339.8 730.2 L348.6 742.7 L357.5 747.7 L366.4 731.5 L375.2 733.5 L384.1 729.8 L393 707.7 L401.9 728.5 L410.8 746.9 L419.6 742.7 L428.5 740.5 L437.4 743.5 L446.2 722.7 L455.1 701.8 L464 729.4 L472.9 754.4 L481.8 714.3 L490.6 710.2 L499.5 738.5 L508.4 755.9 L517.2 747.5 L526.1 764 L535 764.2 L543.9 757.4 L552.8 748.2 L561.6 751.4 L570.5 762.1 L579.4 757 L588.2 753.3 L597.1 755.2 L606 772.3 L614.9 764 L623.8 778.1 L632.6 764 L641.5 759 L650.4 767.3 L659.2 759 L668.1 755.6 L677 790.7 L685.9 784 L694.8 789 L703.6 792.3 L712.5 783.1 L721.4 778.1 L730.2 782.3 L739.1 749.8 L748 738.1 L756.9 713.9 L765.8 764 L774.6 763.1 L783.5 754.8 L792.4 774 L801.2 799 L810.1 795.7 L819 799.8 L827.9 779.8 L836.8 802.3 L845.6 794 L854.5 783.1 L863.4 796.5 L872.2 750.6 L881.1 769.8 L890 786.5 L898.9 794 L907.8 801.5 L916.6 799.8 L925.5 782.3 L934.4 794 L943.2 774 L952.1 783.1 L961 779.8 L969.9 776.8 L978.8 775.6 L987.6 807.3 L996.5 811.5 L1005.4 805.4 L1014.2 819 L1023.1 795.8 L1032 800.5 L1040.9 784.7 L1049.8 676 L1058.6 720.3 L1067.5 633.5 L1076.4 627.5 L1085.2 622.9 L1094.1 614.4 L1103 627.8 L1111.9 631.5 L1120.8 633.7 L1129.6 677.2 L1138.5 700.4 L1147.4 699.5 L1156.2 692.1 L1165.1 676.2 L1174 695.9 L1182.9 696.7 L1191.8 690.3 L1200.6 770.3 L1209.5 771.7 L1218.4 656.3 L1227.2 650.7 L1236.1 657.3 L1245 689.4 L1253.9 706.3 L1262.8 768.6 L1271.6 717.7 L1280.5 697.2 L1289.4 680.5 L1298.2 748.4 L1307.1 743.7 L1316 702.8 L1324.9 701.9 L1333.8 690.7 L1342.6 725.7 L1351.5 700.5 L1360.4 692.5 L1369.2 726.7 L1378.1 749.9 L1387 794.8 L1395.9 839.7 L1404.8 839.7 L1413.6 793.2 L1422.5 783 L1431.4 839.7 L1440.2 839.7 L1449.1 734.9 L1458 772.4 L1466.9 763.6 L1475.8 718.8 L1484.6 827.1 L1493.5 814 L1502.4 839.7 L1511.2 785.9 L1520.1 839.7 L1529 839.2 L1537.9 815.1 L1546.8 774.8 L1555.6 809.6 L1564.5 839.7 L1573.4 839.7 L1582.2 839.7 L1591.1 839.7 L1600 736.8 L1608.9 776.1 L1617.8 738.4 L1626.6 740.6 L1635.5 780.6 L1644.4 820.6 L1653.2 775.8 L1662.1 839.7 L1671 839.7 L1679.9 824.9 L1688.8 799.8 L1697.6 774.8 L1706.5 770.4 L1715.4 799.8 L1724.2 808.5 L1733.1 787.7 L1742 800.8 L1750.9 769.1 L1759.8 839.7 L1768.6 839.7 L1777.5 839.7 L1786.4 839.7 L1795.2 808.5 L1804.1 790.4 L1813 825.5 L1821.9 745 L1830.8 743.9 L1839.6 768 L1848.5 783.3 L1857.4 819.5 L1866.2 839.7 L1875.1 781.7 L1884 793.4 L1892.9 832.3 L1901.8 787.8 L1910.6 661.1 L1919.5 663 L1928.4 777.1 L1937.2 756.7 L1946.1 673.1 L1955 621.6 L1963.9 618.8 L1972.8 655.6 L1981.6 670 L1990.5 693.7 L1999.4 667.7 L2008.2 658.1 L2017.1 727.5 L2026 773.9 L2034.9 760.6 L2043.8 755.7 L2052.6 746 L2061.5 703.2 L2070.4 701.3 L2079.2 637.2 L2088.1 622.3 L2097 620.8 L2105.9 632.4 L2114.8 622.7 L2123.6 620.8 L2132.5 609.1 L2141.4 616.9 L2150.2 644.1 L2159.1 660.6 L2168 673.8 L2176.9 687.8 L2185.8 655.3 L2194.6 628.5 L2203.5 661.7 L2212.4 671.3 L2221.2 683.6 L2230.1 681.6 L2239 662.1 L2247.9 680.6 L2256.8 681.7 L2265.6 682.5 L2274.5 641.7 L2283.4 650.9 L2292.2 663.6 L2301.1 660.4 L2310 611.2 L2318.9 624.7 L2327.8 633 L2336.6 643.1 L2345.5 655.7 L2354.4 616.8 L2363.2 610.6 L2372.1 614.9 L2381 632 L2389.9 610.5 L2398.8 613.1 L2407.6 621.3 L2416.5 615.8 L2425.4 641.8 L2434.2 624.7 L2443.1 610.5 L2452 607.7 L2460.9 610 L2469.8 610.5 L2478.6 607.7 L2487.5 606 L2496.4 609.6 L2505.2 608.1 L2514.1 607.8 L2523 607.8 L2531.9 609.6 L2540.8 608.8 L2549.6 607.7 L2558.5 614.1 L2567.4 608.7 L2576.2 612.3 L2585.1 611.3 L2594 606.9 L2602.9 611.7 L2611.8 622.1 L2620.6 640.2 L2629.5 614.9 L2638.4 610.5 L2647.2 610.5 L2656.1 611 L2665 642.3 L2673.9 623.5 L2682.8 619 L2691.6 618.1 L2700.5 642.9 L2709.4 632.4 L2718.2 611.4 L2727.1 612.3 L2727.1 839.7 Z" fill="rgb(0,0,0)" fill-opacity="0.05" stroke="none"/>
<path d="M180 687.1 L188.9 686.3 L197.8 664.6 L206.6 697.9 L215.5 679.6 L224.4 691.3 L233.2 687.4 L242.1 684.9 L251 701.7 L259.9 700.3 L268.8 703 L277.6 702.5 L286.5 702.5 L295.4 707.6 L304.2 692.7 L313.1 711.7 L322 696.8 L330.9 698.7 L339.8 730.2 L348.6 742.7 L357.5 747.7 L366.4 731.5 L375.2 733.5 L384.1 729.8 L393 707.7 L401.9 728.5 L410.8 746.9 L419.6 742.7 L428.5 740.5 L437.4 743.5 L446.2 722.7 L455.1 701.8 L464 729.4 L472.9 754.4 L481.8 714.3 L490.6 710.2 L499.5 738.5 L508.4 755.9 L517.2 747.5 L526.1 764 L535 764.2 L543.9 757.4 L552.8 748.2 L561.6 751.4 L570.5 762.1 L579.4 757 L588.2 753.3 L597.1 755.2 L606 772.3 L614.9 764 L623.8 778.1 L632.6 764 L641.5 759 L650.4 767.3 L659.2 759 L668.1 755.6 L677 790.7 L685.9 784 L694.8 789 L703.6 792.3 L712.5 783.1 L721.4 778.1 L730.2 782.3 L739.1 749.8 L748 738.1 L756.9 713.9 L765.8 764 L774.6 763.1 L783.5 754.8 L792.4 774 L801.2 799 L810.1 795.7 L819 799.8 L827.9 779.8 L836.8 802.3 L845.6 794 L854.5 783.1 L863.4 796.5 L872.2 750.6 L881.1 769.8 L890 786.5 L898.9 794 L907.8 801.5 L916.6 799.8 L925.5 782.3 L934.4 794 L943.2 774 L952.1 783.1 L961 779.8 L969.9 776.8 L978.8 775.6 L987.6 807.3 L996.5 811.5 L1005.4 805.4 L1014.2 819 L1023.1 795.8 L1032 800.5 L1040.9 784.7 L1049.8 676 L1058.6 720.3 L1067.5 633.5 L1076.4 627.5 L1085.2 622.9 L1094.1 614.4 L1103 627.8 L1111.9 631.5 L1120.8 633.7 L1129.6 677.2 L1138.5 700.4 L1147.4 699.5 L1156.2 692.1 L1165.1 676.2 L1174 695.9 L1182.9 696.7 L1191.8 690.3 L1200.6 770.3 L1209.5 771.7 L1218.4 656.3 L1227.2 650.7 L1236.1 657.3 L1245 689.4 L1253.9 706.3 L1262.8 768.6 L1271.6 717.7 L1280.5 697.2 L1289.4 680.5 L1298.2 748.4 L1307.1 743.7 L1316 702.8 L1324.9 701.9 L1333.8 690.7 L1342.6 725.7 L1351.5 700.5 L1360.4 692.5 L1369.2 726.7 L1378.1 749.9 L1387 794.8 L1395.9 839.7 L1404.8 839.7 L1413.6 793.2 L1422.5 783 L1431.4 839.7 L1440.2 839.7 L1449.1 734.9 L1458 772.4 L1466.9 763.6 L1475.8 718.8 L1484.6 827.1 L1493.5 814 L1502.4 839.7 L1511.2 785.9 L1520.1 839.7 L1529 839.2 L1537.9 815.1 L1546.8 774.8 L1555.6 809.6 L1564.5 839.7 L1573.4 839.7 L1582.2 839.7 L1591.1 839.7 L1600 736.8 L1608.9 776.1 L1617.8 738.4 L1626.6 740.6 L1635.5 780.6 L1644.4 820.6 L1653.2 775.8 L1662.1 839.7 L1671 839.7 L1679.9 824.9 L1688.8 799.8 L1697.6 774.8 L1706.5 770.4 L1715.4 799.8 L1724.2 808.5 L1733.1 787.7 L1742 800.8 L1750.9 769.1 L1759.8 839.7 L1768.6 839.7 L1777.5 839.7 L1786.4 839.7 L1795.2 808.5 L1804.1 790.4 L1813 825.5 L1821.9 745 L1830.8 743.9 L1839.6 768 L1848.5 783.3 L1857.4 819.5 L1866.2 839.7 L1875.1 781.7 L1884 793.4 L1892.9 832.3 L1901.8 787.8 L1910.6 661.1 L1919.5 663 L1928.4 777.1 L1937.2 756.7 L1946.1 673.1 L1955 621.6 L1963.9 618.8 L1972.8 655.6 L1981.6 670 L1990.5 693.7 L1999.4 667.7 L2008.2 658.1 L2017.1 727.5 L2026 773.9 L2034.9 760.6 L2043.8 755.7 L2052.6 746 L2061.5 703.2 L2070.4 701.3 L2079.2 637.2 L2088.1 622.3 L2097 620.8 L2105.9 632.4 L2114.8 622.7 L2123.6 620.8 L2132.5 609.1 L2141.4 616.9 L2150.2 644.1 L2159.1 660.6 L2168 673.8 L2176.9 687.8 L2185.8 655.3 L2194.6 628.5 L2203.5 661.7 L2212.4 671.3 L2221.2 683.6 L2230.1 681.6 L2239 662.1 L2247.9 680.6 L2256.8 681.7 L2265.6 682.5 L2274.5 641.7 L2283.4 650.9 L2292.2 663.6 L2301.1 660.4 L2310 611.2 L2318.9 624.7 L2327.8 633 L2336.6 643.1 L2345.5 655.7 L2354.4 616.8 L2363.2 610.6 L2372.1 614.9 L2381 632 L2389.9 610.5 L2398.8 613.1 L2407.6 621.3 L2416.5 615.8 L2425.4 641.8 L2434.2 624.7 L2443.1 610.5 L2452 607.7 L2460.9 610 L2469.8 610.5 L2478.6 607.7 L2487.5 606 L2496.4 609.6 L2505.2 608.1 L2514.1 607.8 L2523 607.8 L2531.9 609.6 L2540.8 608.8 L2549.6 607.7 L2558.5 614.1 L2567.4 608.7 L2576.2 612.3 L2585.1 611.3 L2594 606.9 L2602.9 611.7 L2611.8 622.1 L2620.6 640.2 L2629.5 614.9 L2638.4 610.5 L2647.2 610.5 L2656.1 611 L2665 642.3 L2673.9 623.5 L2682.8 619 L2691.6 618.1 L2700.5 642.9 L2709.4 632.4 L2718.2 611.4 L2727.1 612.3" stroke="#000000"/>
<path d="M180 839.7 L180 687.5 L188.9 688.4 L197.8 665 L206.6 698.4 L215.5 680 L224.4 691.7 L233.2 687.9 L242.1 685.3 L251 707.5 L259.9 708.4 L268.8 729.2 L277.6 727.9 L286.5 726.2 L295.4 725.9 L304.2 693.4 L313.1 713.4 L322 697.5 L330.9 700.4 L339.8 730.9 L348.6 743.4 L357.5 748.4 L366.4 732.2 L375.2 734.2 L384.1 732.5 L393 708.4 L401.9 729.2 L410.8 747.5 L419.6 743.4 L428.5 741.2 L437.4 744.2 L446.2 723.4 L455.1 702.5 L464 730 L472.9 755.1 L481.8 715 L490.6 710.9 L499.5 739.2 L508.4 756.7 L517.2 748.4 L526.1 765.1 L535 765.9 L543.9 759.2 L552.8 750.1 L561.6 753.4 L570.5 764.2 L579.4 759.2 L588.2 755.2 L597.1 757.1 L606 774.2 L614.9 765.9 L623.8 780.1 L632.6 765.9 L641.5 760.9 L650.4 769.2 L659.2 760.9 L668.1 757.6 L677 792.6 L685.9 785.9 L694.8 790.9 L703.6 794.2 L712.5 785.1 L721.4 780.1 L730.2 784.2 L739.1 751.7 L748 740 L756.9 715.9 L765.8 765.9 L774.6 765.1 L783.5 756.7 L792.4 775.9 L801.2 800.9 L810.1 797.6 L819 801.7 L827.9 781.7 L836.8 804.2 L845.6 795.9 L854.5 785.1 L863.4 798.4 L872.2 752.6 L881.1 771.7 L890 788.4 L898.9 795.9 L907.8 803.4 L916.6 801.7 L925.5 784.2 L934.4 795.9 L943.2 775.9 L952.1 785.1 L961 781.7 L969.9 778.7 L978.8 777.6 L987.6 809.3 L996.5 813.4 L1005.4 807.3 L1014.2 821 L1023.1 797.8 L1032 802.4 L1040.9 786.6 L1049.8 677.9 L1058.6 722.2 L1067.5 634 L1076.4 606.1 L1085.2 597.8 L1094.1 592.2 L1103 606.1 L1111.9 630.3 L1120.8 635 L1129.6 678.7 L1138.5 711.2 L1147.4 713.1 L1156.2 697.3 L1165.1 678.7 L1174 707.5 L1182.9 701.9 L1191.8 698.2 L1200.6 774.5 L1209.5 772.6 L1218.4 657.3 L1227.2 651.7 L1236.1 658.2 L1245 696.4 L1253.9 710.3 L1262.8 770.6 L1271.6 719.6 L1280.5 699.2 L1289.4 682.4 L1298.2 750.3 L1307.1 745.7 L1316 704.7 L1324.9 703.8 L1333.8 692.6 L1342.6 727.7 L1351.5 702.4 L1360.4 694.4 L1369.2 728.6 L1378.1 751.8 L1387 796.8 L1395.9 884.9 L1404.8 881.7 L1413.6 795.1 L1422.5 785 L1431.4 865.2 L1440.2 892.1 L1449.1 736.8 L1458 774.3 L1466.9 765.5 L1475.8 720.8 L1484.6 829.1 L1493.5 815.9 L1502.4 847.3 L1511.2 787.9 L1520.1 853.2 L1529 841.1 L1537.9 817 L1546.8 776.8 L1555.6 811.5 L1564.5 939.7 L1573.4 958.3 L1582.2 925.5 L1591.1 861.9 L1600 738.7 L1608.9 778 L1617.8 740.3 L1626.6 742.5 L1635.5 783.6 L1644.4 822.5 L1653.2 777.7 L1662.1 956.2 L1671 981.9 L1679.9 826.9 L1688.8 801.7 L1697.6 776.7 L1706.5 772.4 L1715.4 801.7 L1724.2 810.4 L1733.1 789.6 L1742 802.8 L1750.9 771 L1759.8 852.1 L1768.6 936.7 L1777.5 911.2 L1786.4 883.8 L1795.2 810.4 L1804.1 792.4 L1813 827.4 L1821.9 746.9 L1830.8 745.8 L1839.6 769.9 L1848.5 785.2 L1857.4 821.4 L1866.2 849.1 L1875.1 783.6 L1884 795.3 L1892.9 834.2 L1901.8 789.7 L1910.6 663 L1919.5 664.9 L1928.4 779 L1937.2 758.6 L1946.1 675 L1955 623.5 L1963.9 620.7 L1972.8 657.5 L1981.6 674.1 L1990.5 699.9 L1999.4 671.2 L2008.2 660 L2017.1 729.5 L2026 775.8 L2034.9 762.5 L2043.8 757.6 L2052.6 747.9 L2061.5 705.2 L2070.4 703.2 L2079.2 639.1 L2088.1 622.6 L2097 611.9 L2105.9 630.3 L2114.8 610.9 L2123.6 612.8 L2132.5 585.6 L2141.4 579.8 L2150.2 633.3 L2159.1 660.5 L2168 674.1 L2176.9 690.6 L2185.8 655.6 L2194.6 617.7 L2203.5 656.6 L2212.4 671.2 L2221.2 687.7 L2230.1 681.8 L2239 662.4 L2247.9 680.9 L2256.8 683.8 L2265.6 682.8 L2274.5 642 L2283.4 642 L2292.2 663.4 L2301.1 659.3 L2310 578.6 L2318.9 603.6 L2327.8 627.7 L2336.6 642 L2345.5 654.6 L2354.4 593.8 L2363.2 564.3 L2372.1 597.3 L2381 627.7 L2389.9 575.9 L2398.8 595.6 L2407.6 618.8 L2416.5 609 L2425.4 642 L2434.2 605.4 L2443.1 572.3 L2452 575 L2460.9 552.7 L2469.8 607.2 L2478.6 581.3 L2487.5 571.4 L2496.4 598.2 L2505.2 599.5 L2514.1 589.3 L2523 586.6 L2531.9 596.5 L2540.8 602.7 L2549.6 575 L2558.5 606.3 L2567.4 591.1 L2576.2 603.6 L2585.1 596.5 L2594 591.1 L2602.9 600 L2611.8 618.8 L2620.6 639.4 L2629.5 611.7 L2638.4 602.7 L2647.2 604.9 L2656.1 605.4 L2665 641.2 L2673.9 622.4 L2682.8 617.9 L2691.6 617 L2700.5 642 L2709.4 631.3 L2718.2 608.1 L2727.1 609 L2727.1 839.7 Z" fill="rgb(245,194,66)" fill-opacity="0.05" stroke="none"/>
<path d="M180 687.5 L188.9 688.4 L197.8 665 L206.6 698.4 L215.5 680 L224.4 691.7 L233.2 687.9 L242.1 685.3 L251 707.5 L259.9 708.4 L268.8 729.2 L277.6 727.9 L286.5 726.2 L295.4 725.9 L304.2 693.4 L313.1 713.4 L322 697.5 L330.9 700.4 L339.8 730.9 L348.6 743.4 L357.5 748.4 L366.4 732.2 L375.2 734.2 L384.1 732.5 L393 708.4 L401.9 729.2 L410.8 747.5 L419.6 743.4 L428.5 741.2 L437.4 744.2 L446.2 723.4 L455.1 702.5 L464 730 L472.9 755.1 L481.8 715 L490.6 710.9 L499.5 739.2 L508.4 756.7 L517.2 748.4 L526.1 765.1 L535 765.9 L543.9 759.2 L552.8 750.1 L561.6 753.4 L570.5 764.2 L579.4 759.2 L588.2 755.2 L597.1 757.1 L606 774.2 L614.9 765.9 L623.8 780.1 L632.6 765.9 L641.5 760.9 L650.4 769.2 L659.2 760.9 L668.1 757.6 L677 792.6 L685.9 785.9 L694.8 790.9 L703.6 794.2 L712.5 785.1 L721.4 780.1 L730.2 784.2 L739.1 751.7 L748 740 L756.9 715.9 L765.8 765.9 L774.6 765.1 L783.5 756.7 L792.4 775.9 L801.2 800.9 L810.1 797.6 L819 801.7 L827.9 781.7 L836.8 804.2 L845.6 795.9 L854.5 785.1 L863.4 798.4 L872.2 752.6 L881.1 771.7 L890 788.4 L898.9 795.9 L907.8 803.4 L916.6 801.7 L925.5 784.2 L934.4 795.9 L943.2 775.9 L952.1 785.1 L961 781.7 L969.9 778.7 L978.8 777.6 L987.6 809.3 L996.5 813.4 L1005.4 807.3 L1014.2 821 L1023.1 797.8 L1032 802.4 L1040.9 786.6 L1049.8 677.9 L1058.6 722.2 L1067.5 634 L1076.4 606.1 L1085.2 597.8 L1094.1 592.2 L1103 606.1 L1111.9 630.3 L1120.8 635 L1129.6 678.7 L1138.5 711.2 L1147.4 713.1 L1156.2 697.3 L1165.1 678.7 L1174 707.5 L1182.9 701.9 L1191.8 698.2 L1200.6 774.5 L1209.5 772.6 L1218.4 657.3 L1227.2 651.7 L1236.1 658.2 L1245 696.4 L1253.9 710.3 L1262.8 770.6 L1271.6 719.6 L1280.5 699.2 L1289.4 682.4 L1298.2 750.3 L1307.1 745.7 L1316 704.7 L1324.9 703.8 L1333.8 692.6 L1342.6 727.7 L1351.5 702.4 L1360.4 694.4 L1369.2 728.6 L1378.1 751.8 L1387 796.8 L1395.9 884.9 L1404.8 881.7 L1413.6 795.1 L1422.5 785 L1431.4 865.2 L1440.2 892.1 L1449.1 736.8 L1458 774.3 L1466.9 765.5 L1475.8 720.8 L1484.6 829.1 L1493.5 815.9 L1502.4 847.3 L1511.2 787.9 L1520.1 853.2 L1529 841.1 L1537.9 817 L1546.8 776.8 L1555.6 811.5 L1564.5 939.7 L1573.4 958.3 L1582.2 925.5 L1591.1 861.9 L1600 738.7 L1608.9 778 L1617.8 740.3 L1626.6 742.5 L1635.5 783.6 L1644.4 822.5 L1653.2 777.7 L1662.1 956.2 L1671 981.9 L1679.9 826.9 L1688.8 801.7 L1697.6 776.7 L1706.5 772.4 L1715.4 801.7 L1724.2 810.4 L1733.1 789.6 L1742 802.8 L1750.9 771 L1759.8 852.1 L1768.6 936.7 L1777.5 911.2 L1786.4 883.8 L1795.2 810.4 L1804.1 792.4 L1813 827.4 L1821.9 746.9 L1830.8 745.8 L1839.6 769.9 L1848.5 785.2 L1857.4 821.4 L1866.2 849.1 L1875.1 783.6 L1884 795.3 L1892.9 834.2 L1901.8 789.7 L1910.6 663 L1919.5 664.9 L1928.4 779 L1937.2 758.6 L1946.1 675 L1955 623.5 L1963.9 620.7 L1972.8 657.5 L1981.6 674.1 L1990.5 699.9 L1999.4 671.2 L2008.2 660 L2017.1 729.5 L2026 775.8 L2034.9 762.5 L2043.8 757.6 L2052.6 747.9 L2061.5 705.2 L2070.4 703.2 L2079.2 639.1 L2088.1 622.6 L2097 611.9 L2105.9 630.3 L2114.8 610.9 L2123.6 612.8 L2132.5 585.6 L2141.4 579.8 L2150.2 633.3 L2159.1 660.5 L2168 674.1 L2176.9 690.6 L2185.8 655.6 L2194.6 617.7 L2203.5 656.6 L2212.4 671.2 L2221.2 687.7 L2230.1 681.8 L2239 662.4 L2247.9 680.9 L2256.8 683.8 L2265.6 682.8 L2274.5 642 L2283.4 642 L2292.2 663.4 L2301.1 659.3 L2310 578.6 L2318.9 603.6 L2327.8 627.7 L2336.6 642 L2345.5 654.6 L2354.4 593.8 L2363.2 564.3 L2372.1 597.3 L2381 627.7 L2389.9 575.9 L2398.8 595.6 L2407.6 618.8 L2416.5 609 L2425.4 642 L2434.2 605.4 L2443.1 572.3 L2452 575 L2460.9 552.7 L2469.8 607.2 L2478.6 581.3 L2487.5 571.4 L2496.4 598.2 L2505.2 599.5 L2514.1 589.3 L2523 586.6 L2531.9 596.5 L2540.8 602.7 L2549.6 575 L2558.5 606.3 L2567.4 591.1 L2576.2 603.6 L2585.1 596.5 L2594 591.1 L2602.9 600 L2611.8 618.8 L2620.6 639.4 L2629.5 611.7 L2638.4 602.7 L2647.2 604.9 L2656.1 605.4 L2665 641.2 L2673.9 622.4 L2682.8 617.9 L2691.6 617 L2700.5 642 L2709.4 631.3 L2718.2 608.1 L2727.1 609" stroke="#f5c242"/>
<path d="M180 1114 L180 482.9 L188.9 482.9 L197.8 482.9 L206.6 482.9 L215.5 482.9 L224.4 482.9 L233.2 482.9 L242.1 482.9 L251 482.9 L259.9 480 L268.8 475.9 L277.6 479.6 L286.5 478.4 L295.4 475.9 L304.2 470.3 L313.1 468.9 L322 466.9 L330.9 464.2 L339.8 465.6 L348.6 463.8 L357.5 462.7 L366.4 483.3 L375.2 461.1 L384.1 459 L393 455.6 L401.9 455.6 L410.8 455.6 L419.6 454.9 L428.5 451.2 L437.4 452.1 L446.2 452.9 L455.1 450.8 L464 448.8 L472.9 453.9 L481.8 451.4 L490.6 449.6 L499.5 447.7 L508.4 453.1 L517.2 453.5 L526.1 450.8 L535 448.8 L543.9 448.8 L552.8 448.8 L561.6 448.8 L570.5 445.1 L579.4 441.4 L588.2 446.9 L597.1 444.3 L606 444.7 L614.9 444.7 L623.8 444.3 L632.6 441.8 L641.5 442 L650.4 442 L659.2 442 L668.1 442 L677 442 L685.9 442 L694.8 442 L703.6 442 L712.5 442 L721.4 440.6 L730.2 438.9 L739.1 434.4 L748 438.9 L756.9 438.1 L765.8 437.5 L774.6 440.6 L783.5 435.4 L792.4 436.4 L801.2 437.7 L810.1 438.5 L819 438.9 L827.9 438.1 L836.8 438.3 L845.6 438.5 L854.5 434.4 L863.4 438.5 L872.2 436.9 L881.1 436 L890 439.5 L898.9 437.5 L907.8 436 L916.6 436.9 L925.5 437.9 L934.4 439.9 L943.2 439.9 L952.1 437.5 L961 434.8 L969.9 434.8 L978.8 439.9 L987.6 439.1 L996.5 438.5 L1005.4 438.7 L1014.2 439.7 L1023.1 439.9 L1032 438.1 L1040.9 436.4 L1049.8 437.3 L1058.6 438.1 L1067.5 439.7 L1076.4 441.4 L1085.2 441.8 L1094.1 445.1 L1103 448.4 L1111.9 448.8 L1120.8 448.8 L1129.6 448.8 L1138.5 448.8 L1147.4 448.8 L1156.2 448.8 L1165.1 448.8 L1174 448.8 L1182.9 448.4 L1191.8 445.7 L1200.6 442.2 L1209.5 442 L1218.4 442 L1227.2 442 L1236.1 442 L1245 442 L1253.9 442 L1262.8 440.1 L1271.6 437.5 L1280.5 434.4 L1289.4 438.9 L1298.2 439.9 L1307.1 437.5 L1316 435 L1324.9 435 L1333.8 435.2 L1342.6 436.4 L1351.5 437.5 L1360.4 434.4 L1369.2 438.9 L1378.1 439.1 L1387 439.1 L1395.9 437.7 L1404.8 437.5 L1413.6 437.9 L1422.5 438.9 L1431.4 438.5 L1440.2 434.4 L1449.1 436.4 L1458 436.9 L1466.9 436.9 L1475.8 437.1 L1484.6 434.8 L1493.5 436.4 L1502.4 437.3 L1511.2 434.8 L1520.1 437.5 L1529 437.5 L1537.9 436 L1546.8 434.8 L1555.6 439.1 L1564.5 438.9 L1573.4 438.5 L1582.2 438.1 L1591.1 434.4 L1600 438.1 L1608.9 439.5 L1617.8 438.1 L1626.6 437.5 L1635.5 437.5 L1644.4 437.5 L1653.2 437.5 L1662.1 437.5 L1671 439.9 L1679.9 439.9 L1688.8 439.3 L1697.6 438.5 L1706.5 438.1 L1715.4 438.1 L1724.2 438.3 L1733.1 438.7 L1742 438.9 L1750.9 438.9 L1759.8 438.9 L1768.6 437.9 L1777.5 437.1 L1786.4 437.7 L1795.2 440.6 L1804.1 438.1 L1813 436.9 L1821.9 437.7 L1830.8 439.9 L1839.6 438.5 L1848.5 439.3 L1857.4 439.5 L1866.2 438.5 L1875.1 437.5 L1884 437.1 L1892.9 437.1 L1901.8 437.5 L1910.6 438.5 L1919.5 438.5 L1928.4 439.3 L1937.2 439.9 L1946.1 439.5 L1955 438.9 L1963.9 440.1 L1972.8 441.6 L1981.6 442 L1990.5 434.8 L1999.4 436 L2008.2 437.5 L2017.1 442.6 L2026 434.8 L2034.9 437.5 L2043.8 438.9 L2052.6 436.9 L2061.5 436.9 L2070.4 436 L2079.2 436 L2088.1 436.4 L2097 441.6 L2105.9 441.6 L2114.8 441.6 L2123.6 441.6 L2132.5 442 L2141.4 448.8 L2150.2 448.8 L2159.1 448.8 L2168 448.8 L2168 1114 Z M2185.8 1114 L2185.8 448.8 L2194.6 448.8 L2203.5 448.8 L2212.4 448.8 L2221.2 448.8 L2230.1 448.8 L2239 448.8 L2247.9 448.8 L2256.8 448.8 L2265.6 448.8 L2274.5 448.8 L2283.4 452.3 L2292.2 452.9 L2301.1 453.9 L2310 456 L2318.9 456 L2327.8 456.6 L2336.6 458 L2345.5 459 L2354.4 459 L2363.2 459.5 L2372.1 460.7 L2381 462.5 L2389.9 466 L2398.8 469.5 L2407.6 469.3 L2416.5 469.3 L2425.4 469.3 L2434.2 476.1 L2443.1 476.5 L2452 479.6 L2460.9 482.7 L2469.8 482.7 L2478.6 484.1 L2487.5 487.8 L2496.4 489.9 L2505.2 489.9 L2514.1 496.4 L2523 496.4 L2531.9 496.4 L2540.8 496.6 L2549.6 503.8 L2558.5 503.6 L2567.4 503.6 L2576.2 503.6 L2585.1 503.6 L2594 505.3 L2602.9 507.3 L2602.9 1114 Z M2620.6 1114 L2620.6 510.4 L2629.5 510.4 L2638.4 510.4 L2647.2 514.1 L2656.1 517.2 L2665 517.2 L2673.9 517.6 L2682.8 521.7 L2691.6 523.4 L2700.5 524.2 L2709.4 524.2 L2718.2 524.2 L2727.1 527.9 L2727.1 1114 Z" fill="rgb(189,195,199)" fill-opacity="0.05" stroke="none"/>
<path d="M180 482.9 L188.9 482.9 L197.8 482.9 L206.6 482.9 L215.5 482.9 L224.4 482.9 L233.2 482.9 L242.1 482.9 L251 482.9 L259.9 480 L268.8 475.9 L277.6 479.6 L286.5 478.4 L295.4 475.9 L304.2 470.3 L313.1 468.9 L322 466.9 L330.9 464.2 L336.3 465.1 M336.3 465.1 L339.8 465.6 L348.6 463.8 L357.5 462.7 L366.4 483.3 L375.2 461.1 L384.1 459 L393 455.6 L401.9 455.6 L410.8 455.6 L419.6 454.9 L428.5 451.2 L437.4 452.1 L446.2 452.9 L455.1 450.8 L464 448.8 L472.9 453.9 L481.8 451.4 L490.6 449.6 L499.2 447.8 M499.2 447.8 L499.5 447.7 L508.4 453.1 L517.2 453.5 L526.1 450.8 L535 448.8 L543.9 448.8 L552.8 448.8 L561.6 448.8 L570.5 445.1 L579.4 441.4 L588.2 446.9 L597.1 444.3 L606 444.7 L614.9 444.7 L623.8 444.3 L632.6 441.8 L641.5 442 L650.4 442 L651.5 442 M651.5 442 L659.2 442 L668.1 442 L677 442 L685.9 442 L694.8 442 L703.6 442 L712.5 442 L721.4 440.6 L730.2 438.9 L739.1 434.4 L748 438.9 L756.9 438.1 L765.8 437.5 L768.2 438.3 M768.2 438.3 L774.6 440.6 L783.5 435.4 L792.4 436.4 L801.2 437.7 L810.1 438.5 L819 438.9 L827.9 438.1 L836.8 438.3 L845.6 438.5 L854.5 434.4 L863.4 438.5 L872.2 436.9 L881.1 436 L890 439.5 L898.9 437.5 L907.8 436 L916.6 436.9 L921.5 437.4 M921.5 437.4 L925.5 437.9 L934.4 439.9 L943.2 439.9 L952.1 437.5 L961 434.8 L969.9 434.8 L978.8 439.9 L987.6 439.1 L996.5 438.5 L1005.4 438.7 L1014.2 439.7 L1023.1 439.9 L1032 438.1 L1040.9 436.4 L1049.8 437.3 L1058.6 438.1 L1067.5 439.7 L1076.4 441.4 L1078.5 441.5 M1078.5 441.5 L1085.2 441.8 L1094.1 445.1 L1103 448.4 L1111.9 448.8 L1120.8 448.8 L1129.6 448.8 L1138.5 448.8 L1147.4 448.8 L1156.2 448.8 L1165.1 448.8 L1174 448.8 L1182.9 448.4 L1191.8 445.7 L1200.6 442.2 L1209.5 442 L1218.4 442 L1227.2 442 L1235.7 442 M1235.7 442 L1236.1 442 L1245 442 L1253.9 442 L1262.8 440.1 L1271.6 437.5 L1280.5 434.4 L1289.4 438.9 L1298.2 439.9 L1307.1 437.5 L1316 435 L1324.9 435 L1333.8 435.2 L1342.6 436.4 L1351.5 437.5 L1360.4 434.4 L1369.2 438.9 L1378.1 439.1 L1387 439.1 L1389 438.8 M1389 438.8 L1395.9 437.7 L1404.8 437.5 L1413.6 437.9 L1422.5 438.9 L1431.4 438.5 L1440.2 434.4 L1449.1 436.4 L1458 436.9 L1466.9 436.9 L1475.8 437.1 L1484.6 434.8 L1493.5 436.4 L1502.4 437.3 L1511.2 434.8 L1520.1 437.5 L1529 437.5 L1537.9 436 L1545.4 435 M1545.4 435 L1546.8 434.8 L1555.6 439.1 L1564.5 438.9 L1573.4 438.5 L1582.2 438.1 L1591.1 434.4 L1600 438.1 L1608.9 439.5 L1617.8 438.1 L1626.6 437.5 L1635.5 437.5 L1644.4 437.5 L1653.2 437.5 L1662.1 437.5 L1671 439.9 L1679.9 439.9 L1688.8 439.3 L1697.6 438.5 L1701.4 438.3 M1701.4 438.3 L1706.5 438.1 L1715.4 438.1 L1724.2 438.3 L1733.1 438.7 L1742 438.9 L1750.9 438.9 L1759.8 438.9 L1768.6 437.9 L1777.5 437.1 L1786.4 437.7 L1795.2 440.6 L1804.1 438.1 L1813 436.9 L1821.9 437.7 L1830.8 439.9 L1839.6 438.5 L1848.5 439.3 L1856.5 439.5 M1856.5 439.5 L1857.4 439.5 L1866.2 438.5 L1875.1 437.5 L1884 437.1 L1892.9 437.1 L1901.8 437.5 L1910.6 438.5 L1919.5 438.5 L1928.4 439.3 L1937.2 439.9 L1946.1 439.5 L1955 438.9 L1963.9 440.1 L1972.8 441.6 L1981.6 442 L1990.5 434.8 L1999.4 436 L2008.2 437.5 L2012.9 440.2 M2012.9 440.2 L2017.1 442.6 L2026 434.8 L2034.9 437.5 L2043.8 438.9 L2052.6 436.9 L2061.5 436.9 L2070.4 436 L2079.2 436 L2088.1 436.4 L2097 441.6 L2105.9 441.6 L2114.8 441.6 L2123.6 441.6 L2125.5 441.7 M2125.5 441.7 L2132.5 442 L2141.4 448.8 L2150.2 448.8 L2159.1 448.8 L2168 448.8 M2185.8 448.8 L2194.6 448.8 L2203.5 448.8 L2212.4 448.8 L2221.2 448.8 L2230.1 448.8 L2239 448.8 L2247.9 448.8 L2256.8 448.8 L2265.6 448.8 L2274.5 448.8 L2283.4 452.3 L2292.2 452.9 L2301.1 453.9 L2310 456 L2318.9 456 L2327.8 456.6 L2336.6 458 L2343 458.8 M2343 458.8 L2345.5 459 L2354.4 459 L2363.2 459.5 L2372.1 460.7 L2381 462.5 L2389.9 466 L2398.8 469.5 L2407.6 469.3 L2416.5 469.3 L2425.4 469.3 L2434.2 476.1 L2443.1 476.5 L2452 479.6 L2460.9 482.7 L2469.8 482.7 L2478.6 484.1 L2487.5 487.8 L2494.4 489.4 M2494.4 489.4 L2496.4 489.9 L2505.2 489.9 L2514.1 496.4 L2523 496.4 L2531.9 496.4 L2540.8 496.6 L2549.6 503.8 L2558.5 503.6 L2567.4 503.6 L2576.2 503.6 L2585.1 503.6 L2594 505.3 L2602.9 507.3 M2620.6 510.4 L2629.5 510.4 L2638.4 510.4 L2647.2 514.1 L2656.1 517.2 L2665 517.2 L2673.9 517.6 L2682.8 521.7 L2691.6 523.4 L2700.5 524.2 L2709.4 524.2 L2718.2 524.2 L2727.1 527.9" stroke="#bbc0c6" stroke-dasharray="20 20"/>
</g>
<g font-family="'Liberation Sans', sans-serif" font-size="24" fill="#595959"><text x="154.5" y="436.6" text-anchor="end">30</text><text x="154.5" y="573.8" text-anchor="end">20</text><text x="154.5" y="711" text-anchor="end">10</text><text x="154.5" y="848.2" text-anchor="end">0</text><text x="154.5" y="985.4" text-anchor="end">-10</text><text x="154.5" y="1122.6" text-anchor="end">-20</text><text x="2762" y="436.6">100</text><text x="2762" y="573.8">80</text><text x="2762" y="711">60</text><text x="2762" y="848.2">40</text><text x="2762" y="985.4">20</text><text x="2762" y="1122.6">0</text><text x="180" y="1157.8" text-anchor="middle">00:00</text><text x="286.5" y="1157.8" text-anchor="middle">01:00</text><text x="393" y="1157.8" text-anchor="middle">02:00</text><text x="499.5" y="1157.8" text-anchor="middle">03:00</text><text x="606" y="1157.8" text-anchor="middle">04:00</text><text x="712.5" y="1157.8" text-anchor="middle">05:00</text><text x="819" y="1157.8" text-anchor="middle">06:00</text><text x="925.5" y="1157.8" text-anchor="middle">07:00</text><text x="1032" y="1157.8" text-anchor="middle">08:00</text><text x="1138.5" y="1157.8" text-anchor="middle">09:00</text><text x="1245" y="1157.8" text-anchor="middle">10:00</text><text x="1351.5" y="1157.8" text-anchor="middle">11:00</text><text x="1458" y="1157.8" text-anchor="middle">12:00</text><text x="1564.5" y="1157.8" text-anchor="middle">13:00</text><text x="1671" y="1157.8" text-anchor="middle">14:00</text><text x="1777.5" y="1157.8" text-anchor="middle">15:00</text><text x="1884" y="1157.8" text-anchor="middle">16:00</text><text x="1990.5" y="1157.8" text-anchor="middle">17:00</text><text x="2097" y="1157.8" text-anchor="middle">18:00</text><text x="2203.5" y="1157.8" text-anchor="middle">19:00</text><text x="2310" y="1157.8" text-anchor="middle">20:00</text><text x="2416.5" y="1157.8" text-anchor="middle">21:00</text><text x="2523" y="1157.8" text-anchor="middle">22:00</text><text x="2629.5" y="1157.8" text-anchor="middle">23:00</text><text x="2736" y="1157.8" text-anchor="middle">00:00</text><text transform="translate(92.3 771.5) rotate(-90)" text-anchor="middle">kW</text><text transform="translate(2843 771.5) rotate(-90)" text-anchor="middle">%</text><rect x="557.5" y="1191" width="80" height="24" fill="rgb(95,209,63)" fill-opacity="0.05" stroke="#5fd13f" stroke-width="4"/><text x="649.5" y="1211.3" textLength="251.5" lengthAdjust="spacingAndGlyphs">Charge power: 3,9 kWh</text><rect x="922.4" y="1191" width="80" height="24" fill="rgb(181,36,26)" fill-opacity="0.05" stroke="#b5241a" stroke-width="4"/><text x="1014.4" y="1211.3" textLength="281.4" lengthAdjust="spacingAndGlyphs">Discharge power: 5,6 kWh</text><rect x="1316.4" y="1191" width="80" height="24" fill="rgb(0,0,200)" fill-opacity="0.05" stroke="#0000c0" stroke-width="4"/><text x="1408.4" y="1211.3" textLength="166.1" lengthAdjust="spacingAndGlyphs">Sell: 213,6 kWh</text><rect x="1595.6" y="1191" width="80" height="24" fill="rgb(0,0,0)" fill-opacity="0.05" stroke="#000000" stroke-width="4"/><text x="1688.3" y="1211.3" textLength="141.7" lengthAdjust="spacingAndGlyphs">Buy: 9,3 kWh</text><rect x="1850.6" y="1191" width="80" height="24" fill="rgb(245,194,66)" fill-opacity="0.05" stroke="#f5c242" stroke-width="4"/><text x="1943.3" y="1211.3" textLength="142.9" lengthAdjust="spacingAndGlyphs">Consumption</text><rect x="2107.6" y="1191" width="80" height="24" fill="rgb(189,195,199)" fill-opacity="0.05" stroke="#bbc0c6" stroke-width="4" stroke-dasharray="20 20"/><text x="2199.5" y="1211.3" textLength="163.1" lengthAdjust="spacingAndGlyphs">State of charge</text></g>
</svg>
<div class="card" style="left:30px;top:1323px;width:670px;height:217px"><div class="chead"><svg width="90" height="100" viewBox="0 0 90 100" style="position:absolute;left:20px;top:7px" fill="none" stroke="#92c050" stroke-width="1.55" stroke-linecap="butt" stroke-linejoin="bevel">
<path d="M24.6 24.1 L32.9 17.5 H54.9 L63.5 24.1 Z"/>
<path d="M42.5 17.5 L25.9 79.6 M45.5 17.5 L62.2 79.6"/>
<path d="M34.3 34.9 H53.4 M30.1 54.4 H58"/>
<path d="M40.9 24.1 L48.6 34.9 M47.1 24.1 L39.4 34.9 M38 34.9 L54.8 54.4 M50 34.9 L33.3 54.4 M33.1 54.4 L59.3 71.5 M54.9 54.4 L28.7 71.5"/>
<path d="M25.9 24.1 V30.8 M62.1 24.1 V30.8" stroke-width="1.3"/>
<path d="M23.4 26.2 H28.6 M23.4 27.55 H28.6 M23.9 28.9 H28.1 M59.5 26.2 H64.7 M59.5 27.55 H64.7 M60 28.9 H64.2" stroke-width="0.75"/>
<path d="M23.6 79.7 H28.6 M59.6 79.7 H64.6" stroke-width="2.2"/>
</svg><span class="ctitle">Autarchy</span></div><div class="abs" style="left:32px;top:140.5px;width:607px;height:39px;border-radius:10px;background:#f4f4f4"></div><div class="abs" style="left:34px;top:144px;width:604px;height:32px;border-radius:8px 5px 5px 8px;background:#dfb075;text-align:center;font-size:28px;line-height:33px;color:#222;letter-spacing:.6px;-webkit-text-stroke:1.1px #222">100 %</div></div>
<div class="card" style="left:760px;top:1323px;width:670px;height:250px"><div class="chead"><svg width="70" height="40" viewBox="0 0 70 40" style="position:absolute;left:30px;top:37px">
<rect x="3.5" y="3.5" width="56.5" height="30.6" rx="4.5" fill="none" stroke="#6ecf7b" stroke-width="3.4"/>
<rect x="61.6" y="12.6" width="4.4" height="12.6" rx="1.5" fill="#6ecf7b"/>
<rect x="9" y="7.4" width="6.8" height="22.8" fill="#6ecf7b"/><rect x="18" y="7.4" width="8.2" height="22.8" fill="#6ecf7b"/><rect x="28.2" y="7.4" width="8.2" height="22.8" fill="#6ecf7b"/><rect x="38.2" y="7.4" width="8.2" height="22.8" fill="#6ecf7b"/>
</svg><span class="ctitle">Storage System</span></div><div class="rows"><div class="row"><span>Charge power</span><span>3.9 kWh</span></div><div class="row"><span>Discharge power</span><span>5.6 kWh</span></div></div></div>
<div class="card" style="left:1490px;top:1323px;width:670px;height:250px"><div class="chead"><svg width="90" height="100" viewBox="0 0 90 100" style="position:absolute;left:20px;top:7px" fill="none" stroke="#222" stroke-width="1.55" stroke-linecap="butt" stroke-linejoin="bevel">
<path d="M24.6 24.1 L32.9 17.5 H54.9 L63.5 24.1 Z"/>
<path d="M42.5 17.5 L25.9 79.6 M45.5 17.5 L62.2 79.6"/>
<path d="M34.3 34.9 H53.4 M30.1 54.4 H58"/>
<path d="M40.9 24.1 L48.6 34.9 M47.1 24.1 L39.4 34.9 M38 34.9 L54.8 54.4 M50 34.9 L33.3 54.4 M33.1 54.4 L59.3 71.5 M54.9 54.4 L28.7 71.5"/>
<path d="M25.9 24.1 V30.8 M62.1 24.1 V30.8" stroke-width="1.3"/>
<path d="M23.4 26.2 H28.6 M23.4 27.55 H28.6 M23.9 28.9 H28.1 M59.5 26.2 H64.7 M59.5 27.55 H64.7 M60 28.9 H64.2" stroke-width="0.75"/>
<path d="M23.6 79.7 H28.6 M59.6 79.7 H64.6" stroke-width="2.2"/>
</svg><span class="ctitle">Grid</span></div><div class="rows"><div class="row"><span>Sell</span><span>213,6 kWh</span></div><div class="row"><span>Buy</span><span>9,3 kWh</span></div></div></div>
<div class="card" style="left:2220px;top:1323px;width:670px;height:300px"><div class="chead"><svg width="90" height="100" viewBox="0 0 90 100" style="position:absolute;left:20px;top:7px">
<path fill="#f5c344" d="M43.9 18.7 C33.9 18.7 25.8 26.8 25.8 36.8 C25.8 40.6 26.9 43.6 28.6 46.6 C30.6 50.2 32.2 52.8 32.8 56.4 C33.1 58.6 33.6 60 35.6 60 H52.2 C54.2 60 54.7 58.6 55 56.4 C55.6 52.8 57.2 50.2 59.2 46.6 C60.9 43.6 62 40.6 62 36.8 C62 26.8 53.9 18.7 43.9 18.7 Z"/>
<rect fill="#f5c344" x="33.9" y="61.9" width="20.3" height="4.7" rx="2.35"/>
<rect fill="#f5c344" x="33.7" y="67.8" width="20.7" height="4.7" rx="2.35"/>
<rect fill="#f5c344" x="35.9" y="73.8" width="16.4" height="4.7" rx="2.35"/>
<path fill="#f4f4f4" d="M51 32.7 C44.5 33.6 38.9 37.6 38.9 43.2 C38.9 45 39.3 46.2 39.8 47 C40.8 44.4 42.6 42 45.4 40.4 C43.4 43 41.6 47.4 41.3 55.6 H43.5 C43.5 52.6 43.7 50.6 44.3 49.3 C48.7 48.6 51 46 51 40.4 Z"/>
</svg><span class="ctitle">Consumption</span></div><div class="rows"><div class="row"><span>Kast A</span><span>0 kWh</span></div><div class="row"><span>Kast B</span><span>49,7 kWh</span></div><div class="row"><span>Kast C</span><span>0 kWh</span></div></div></div>
<div id="h2sh" class="abs"></div><div id="h2" class="abs"></div><div id="h1" class="abs"></div>
<div class="abs" style="z-index:6;left:0;top:0;width:2924px;height:218px"><svg class="abs" style="left:22px;top:26px" width="48" height="48" viewBox="0 0 48 48"><path d="M6 12h36v4H6zM6 22h36v4H6zM6 32h36v4H6z" fill="#000"/></svg><div class="abs title">OpenEMS UI</div><div class="abs tab" style="left:1027px;color:rgba(0,0,0,.6)">LIVE</div><div class="abs tab" style="left:1459px;color:#000">HISTORY</div><div class="abs" style="left:1459px;top:102px;width:441px;height:4px;background:#000"></div><svg class="abs" style="left:1197.5px;top:142px" width="40" height="40" viewBox="0 0 512 512" fill="none" stroke="#000" stroke-width="48" stroke-linecap="round" stroke-linejoin="round"><path d="M244 400L100 256l144-144M120 256h292"/></svg><svg class="abs" style="left:1682.9px;top:142px" width="40" height="40" viewBox="0 0 512 512" fill="none" stroke="#000" stroke-width="48" stroke-linecap="round" stroke-linejoin="round"><path d="M268 112l144 144-144 144M392 256H100"/></svg><div class="abs date">SATURDAY, 2024-06-08</div><div class="abs" style="left:2847px;top:18px;width:71px;height:64px;border-radius:32px;background:#f4f4f4"><svg width="40" height="40" viewBox="0 0 512 512" style="position:absolute;left:15.6px;top:11.5px" fill="none" stroke="#4acc76" stroke-width="27" stroke-linecap="round" stroke-linejoin="round"><path d="M448 256c0-106-86-192-192-192S64 150 64 256s86 192 192 192 192-86 192-192z"/><path d="M352 176L217.600 336 160 272"/></svg></div></div>
<div id="footsh" class="abs"></div><div id="foot" class="abs"></div>
</body></html>
